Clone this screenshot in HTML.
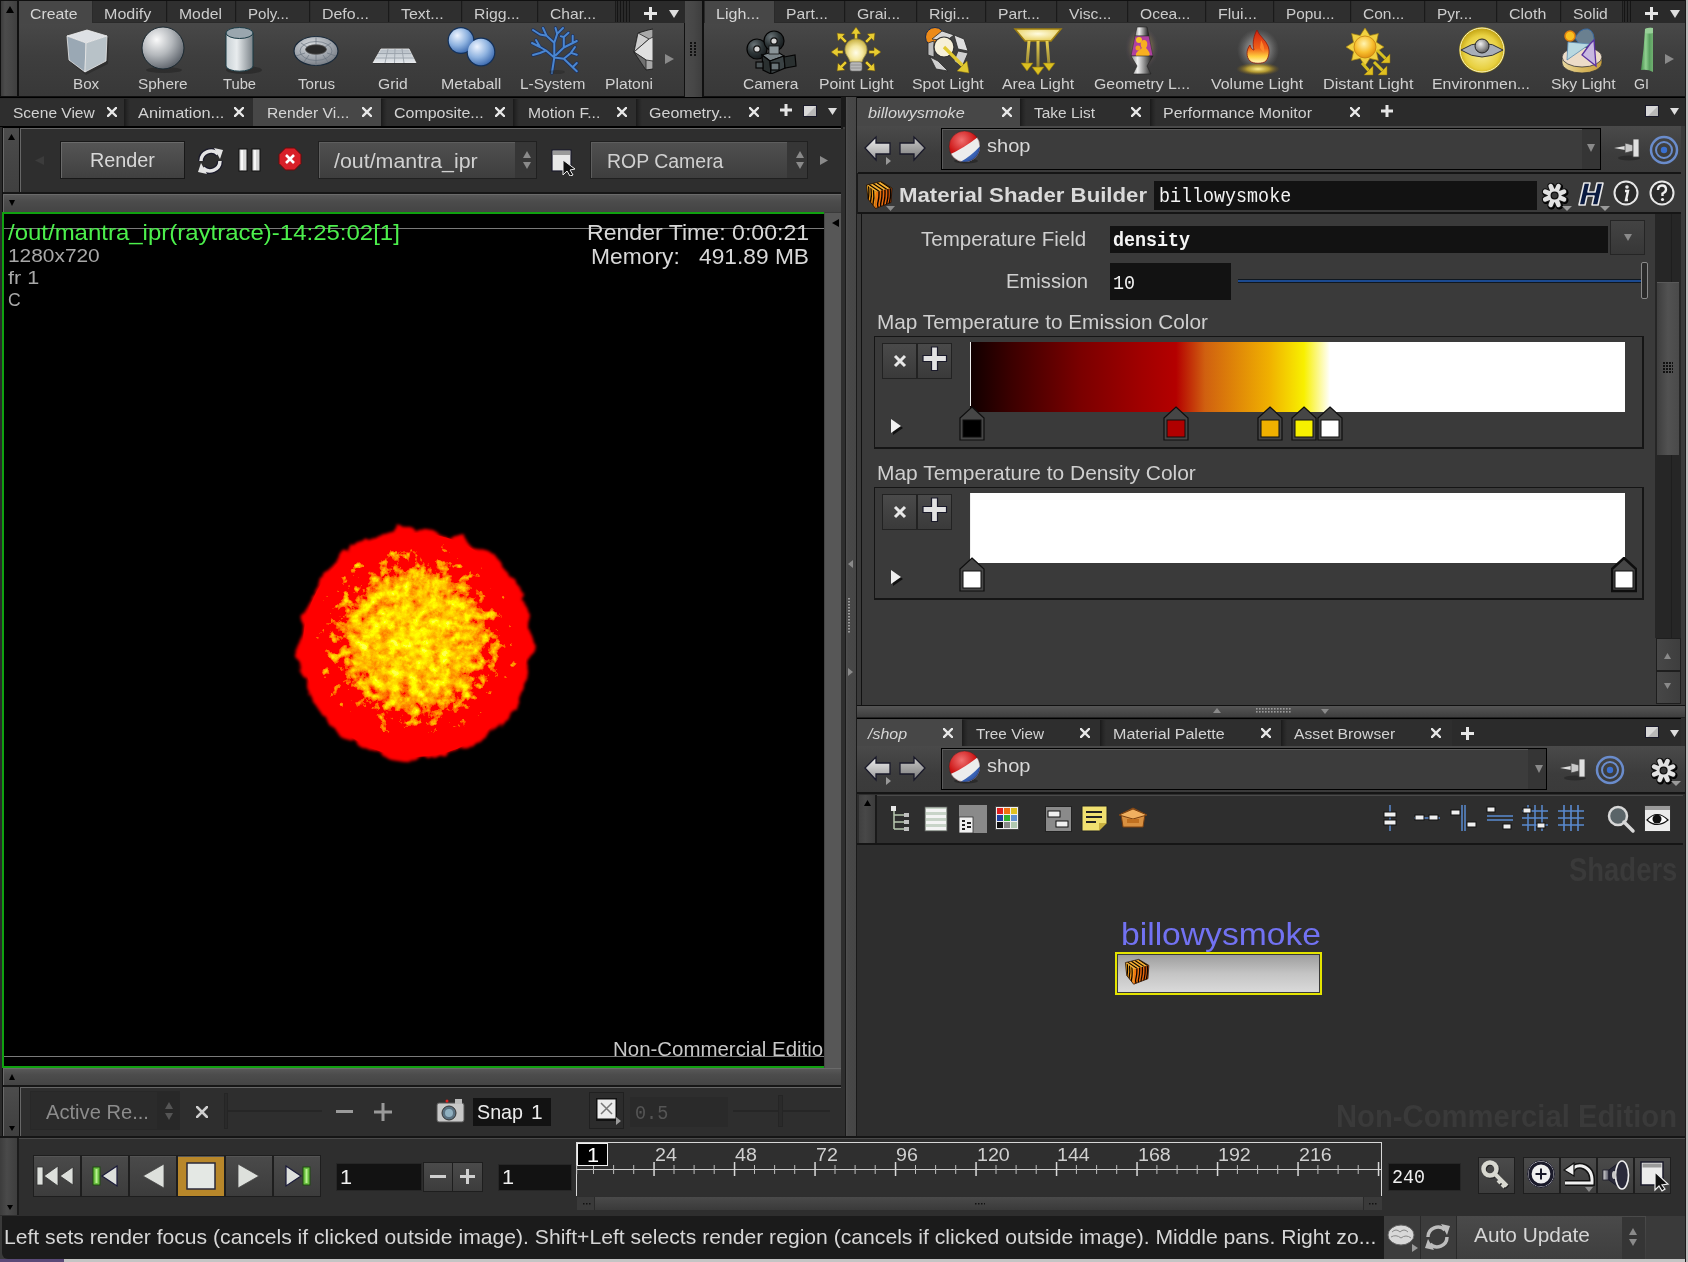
<!DOCTYPE html><html><head><meta charset="utf-8"><style>
*{margin:0;padding:0;box-sizing:border-box}
html,body{width:1688px;height:1262px;overflow:hidden;background:#3a3a3a}
div,span,svg{position:absolute;display:block}
.t{white-space:nowrap;line-height:1;transform-origin:0 0}
</style></head><body><div style="left:0px;top:0px;width:1688px;height:98px;background:#101010"></div>
<div style="left:1px;top:1px;width:16px;height:95px;background:linear-gradient(90deg,#3c3c3c,#4c4c4c 25%,#454545 70%,#3f3f3f)"></div>
<svg style="left:6px;top:6px" width="8" height="7" viewBox="0 0 8 7"><polygon points="4,0 8,7 0,7" fill="#000"/></svg>
<div style="left:19px;top:1px;width:666px;height:22px;background:#2a2a2a"></div>
<div style="left:19px;top:23px;width:665px;height:73px;background:linear-gradient(#484848,#3e3e3e 45%,#383838)"></div>
<div style="left:19px;top:1px;width:73px;height:23px;background:#474747"></div>
<span class="t" style="left:30.00px;top:5.62px;font-size:15.15px;font-family:'Liberation Sans',sans-serif;font-weight:normal;font-style:normal;color:#d4d4d4;transform:scaleX(1.0450);">Create</span>
<div style="left:93px;top:1px;width:74px;height:21px;background:#2f2f2f;border-right:1px solid #1a1a1a"></div>
<span class="t" style="left:104.00px;top:5.62px;font-size:15.15px;font-family:'Liberation Sans',sans-serif;font-weight:normal;font-style:normal;color:#cccccc;transform:scaleX(1.0617);">Modify</span>
<div style="left:168px;top:1px;width:68px;height:21px;background:#2f2f2f;border-right:1px solid #1a1a1a"></div>
<span class="t" style="left:179.00px;top:5.62px;font-size:15.15px;font-family:'Liberation Sans',sans-serif;font-weight:normal;font-style:normal;color:#cccccc;transform:scaleX(1.0401);">Model</span>
<div style="left:237px;top:1px;width:73px;height:21px;background:#2f2f2f;border-right:1px solid #1a1a1a"></div>
<span class="t" style="left:248.00px;top:5.62px;font-size:15.15px;font-family:'Liberation Sans',sans-serif;font-weight:normal;font-style:normal;color:#cccccc;transform:scaleX(0.9978);">Poly...</span>
<div style="left:311px;top:1px;width:78px;height:21px;background:#2f2f2f;border-right:1px solid #1a1a1a"></div>
<span class="t" style="left:322.00px;top:5.62px;font-size:15.15px;font-family:'Liberation Sans',sans-serif;font-weight:normal;font-style:normal;color:#cccccc;transform:scaleX(1.0524);">Defo...</span>
<div style="left:390px;top:1px;width:72px;height:21px;background:#2f2f2f;border-right:1px solid #1a1a1a"></div>
<span class="t" style="left:401.00px;top:5.62px;font-size:15.15px;font-family:'Liberation Sans',sans-serif;font-weight:normal;font-style:normal;color:#cccccc;transform:scaleX(1.0542);">Text...</span>
<div style="left:463px;top:1px;width:75px;height:21px;background:#2f2f2f;border-right:1px solid #1a1a1a"></div>
<span class="t" style="left:474.00px;top:5.62px;font-size:15.15px;font-family:'Liberation Sans',sans-serif;font-weight:normal;font-style:normal;color:#cccccc;transform:scaleX(1.0437);">Rigg...</span>
<div style="left:539px;top:1px;width:77px;height:21px;background:#2f2f2f;border-right:1px solid #1a1a1a"></div>
<span class="t" style="left:550.00px;top:5.62px;font-size:15.15px;font-family:'Liberation Sans',sans-serif;font-weight:normal;font-style:normal;color:#cccccc;transform:scaleX(1.0309);">Char...</span>
<div style="left:617px;top:1px;width:1px;height:21px;background:#151515"></div>
<div style="left:620px;top:1px;width:1px;height:21px;background:#151515"></div>
<div style="left:623px;top:1px;width:1px;height:21px;background:#151515"></div>
<div style="left:626px;top:1px;width:1px;height:21px;background:#151515"></div>
<div style="left:629px;top:1px;width:1px;height:21px;background:#151515"></div>
<svg style="left:644px;top:7px" width="13" height="13" viewBox="0 0 13 13"><rect x="5" y="0" width="3" height="13" fill="#e6e6e6"/><rect x="0" y="5" width="13" height="3" fill="#e6e6e6"/></svg>
<svg style="left:669px;top:10px" width="10" height="8" viewBox="0 0 10 8"><polygon points="0,0 10,0 5,8" fill="#dedede"/></svg>
<div style="left:684px;top:23px;width:1px;height:74px;background:#111"></div>
<div style="left:685px;top:1px;width:17px;height:96px;background:linear-gradient(90deg,#4b4b4b,#474747 50%,#3e3e3e)"></div>
<svg style="left:690px;top:42px" width="7" height="15" viewBox="0 0 7 15"><rect x="0" y="0" width="2" height="2" fill="#111"/><rect x="4" y="0" width="2" height="2" fill="#111"/><rect x="0" y="3" width="2" height="2" fill="#111"/><rect x="4" y="3" width="2" height="2" fill="#111"/><rect x="0" y="6" width="2" height="2" fill="#111"/><rect x="4" y="6" width="2" height="2" fill="#111"/><rect x="0" y="9" width="2" height="2" fill="#111"/><rect x="4" y="9" width="2" height="2" fill="#111"/><rect x="0" y="12" width="2" height="2" fill="#111"/><rect x="4" y="12" width="2" height="2" fill="#111"/></svg>
<div style="left:704px;top:1px;width:981px;height:22px;background:#2a2a2a"></div>
<div style="left:704px;top:23px;width:981px;height:73px;background:linear-gradient(#484848,#3e3e3e 45%,#383838)"></div>
<div style="left:705px;top:1px;width:69px;height:23px;background:#474747"></div>
<span class="t" style="left:716.00px;top:5.62px;font-size:15.15px;font-family:'Liberation Sans',sans-serif;font-weight:normal;font-style:normal;color:#d4d4d4;transform:scaleX(1.0591);">Ligh...</span>
<div style="left:775px;top:1px;width:70px;height:21px;background:#2f2f2f;border-right:1px solid #1a1a1a"></div>
<span class="t" style="left:786.00px;top:5.62px;font-size:15.15px;font-family:'Liberation Sans',sans-serif;font-weight:normal;font-style:normal;color:#cccccc;transform:scaleX(1.0361);">Part...</span>
<div style="left:846px;top:1px;width:71px;height:21px;background:#2f2f2f;border-right:1px solid #1a1a1a"></div>
<span class="t" style="left:857.00px;top:5.62px;font-size:15.15px;font-family:'Liberation Sans',sans-serif;font-weight:normal;font-style:normal;color:#cccccc;transform:scaleX(1.0502);">Grai...</span>
<div style="left:918px;top:1px;width:68px;height:21px;background:#2f2f2f;border-right:1px solid #1a1a1a"></div>
<span class="t" style="left:929.00px;top:5.62px;font-size:15.15px;font-family:'Liberation Sans',sans-serif;font-weight:normal;font-style:normal;color:#cccccc;transform:scaleX(1.0483);">Rigi...</span>
<div style="left:987px;top:1px;width:70px;height:21px;background:#2f2f2f;border-right:1px solid #1a1a1a"></div>
<span class="t" style="left:998.00px;top:5.62px;font-size:15.15px;font-family:'Liberation Sans',sans-serif;font-weight:normal;font-style:normal;color:#cccccc;transform:scaleX(1.0361);">Part...</span>
<div style="left:1058px;top:1px;width:70px;height:21px;background:#2f2f2f;border-right:1px solid #1a1a1a"></div>
<span class="t" style="left:1069.00px;top:5.62px;font-size:15.15px;font-family:'Liberation Sans',sans-serif;font-weight:normal;font-style:normal;color:#cccccc;transform:scaleX(1.0341);">Visc...</span>
<div style="left:1129px;top:1px;width:77px;height:21px;background:#2f2f2f;border-right:1px solid #1a1a1a"></div>
<span class="t" style="left:1140.00px;top:5.62px;font-size:15.15px;font-family:'Liberation Sans',sans-serif;font-weight:normal;font-style:normal;color:#cccccc;transform:scaleX(1.0301);">Ocea...</span>
<div style="left:1207px;top:1px;width:67px;height:21px;background:#2f2f2f;border-right:1px solid #1a1a1a"></div>
<span class="t" style="left:1218.00px;top:5.62px;font-size:15.15px;font-family:'Liberation Sans',sans-serif;font-weight:normal;font-style:normal;color:#cccccc;transform:scaleX(1.0491);">Flui...</span>
<div style="left:1275px;top:1px;width:76px;height:21px;background:#2f2f2f;border-right:1px solid #1a1a1a"></div>
<span class="t" style="left:1286.00px;top:5.62px;font-size:15.15px;font-family:'Liberation Sans',sans-serif;font-weight:normal;font-style:normal;color:#cccccc;transform:scaleX(1.0129);">Popu...</span>
<div style="left:1352px;top:1px;width:73px;height:21px;background:#2f2f2f;border-right:1px solid #1a1a1a"></div>
<span class="t" style="left:1363.00px;top:5.62px;font-size:15.15px;font-family:'Liberation Sans',sans-serif;font-weight:normal;font-style:normal;color:#cccccc;transform:scaleX(1.0248);">Con...</span>
<div style="left:1426px;top:1px;width:71px;height:21px;background:#2f2f2f;border-right:1px solid #1a1a1a"></div>
<span class="t" style="left:1437.00px;top:5.62px;font-size:15.15px;font-family:'Liberation Sans',sans-serif;font-weight:normal;font-style:normal;color:#cccccc;transform:scaleX(1.0225);">Pyr...</span>
<div style="left:1498px;top:1px;width:63px;height:21px;background:#2f2f2f;border-right:1px solid #1a1a1a"></div>
<span class="t" style="left:1509.00px;top:5.62px;font-size:15.15px;font-family:'Liberation Sans',sans-serif;font-weight:normal;font-style:normal;color:#cccccc;transform:scaleX(1.0570);">Cloth</span>
<div style="left:1562px;top:1px;width:61px;height:21px;background:#2f2f2f;border-right:1px solid #1a1a1a"></div>
<span class="t" style="left:1573.00px;top:5.62px;font-size:15.15px;font-family:'Liberation Sans',sans-serif;font-weight:normal;font-style:normal;color:#cccccc;transform:scaleX(1.0341);">Solid</span>
<div style="left:1624px;top:1px;width:1px;height:21px;background:#151515"></div>
<div style="left:1627px;top:1px;width:1px;height:21px;background:#151515"></div>
<div style="left:1630px;top:1px;width:1px;height:21px;background:#151515"></div>
<svg style="left:1645px;top:7px" width="13" height="13" viewBox="0 0 13 13"><rect x="5" y="0" width="3" height="13" fill="#e6e6e6"/><rect x="0" y="5" width="13" height="3" fill="#e6e6e6"/></svg>
<svg style="left:1670px;top:10px" width="10" height="8" viewBox="0 0 10 8"><polygon points="0,0 10,0 5,8" fill="#dedede"/></svg>
<span class="t" style="left:72.89px;top:77.30px;font-size:14.94px;font-family:'Liberation Sans',sans-serif;font-weight:normal;font-style:normal;color:#d0d0d0;transform:scaleX(1.0183);">Box</span>
<span class="t" style="left:137.66px;top:77.30px;font-size:14.94px;font-family:'Liberation Sans',sans-serif;font-weight:normal;font-style:normal;color:#d0d0d0;transform:scaleX(1.0310);">Sphere</span>
<span class="t" style="left:223.16px;top:77.30px;font-size:14.94px;font-family:'Liberation Sans',sans-serif;font-weight:normal;font-style:normal;color:#d0d0d0;transform:scaleX(0.9875);">Tube</span>
<span class="t" style="left:297.51px;top:77.30px;font-size:14.94px;font-family:'Liberation Sans',sans-serif;font-weight:normal;font-style:normal;color:#d0d0d0;transform:scaleX(1.0121);">Torus</span>
<span class="t" style="left:378.20px;top:77.30px;font-size:14.94px;font-family:'Liberation Sans',sans-serif;font-weight:normal;font-style:normal;color:#d0d0d0;transform:scaleX(1.0487);">Grid</span>
<span class="t" style="left:440.78px;top:77.30px;font-size:14.94px;font-family:'Liberation Sans',sans-serif;font-weight:normal;font-style:normal;color:#d0d0d0;transform:scaleX(1.0701);">Metaball</span>
<span class="t" style="left:520.37px;top:77.30px;font-size:14.94px;font-family:'Liberation Sans',sans-serif;font-weight:normal;font-style:normal;color:#d0d0d0;transform:scaleX(1.0345);">L-System</span>
<span class="t" style="left:743.34px;top:77.30px;font-size:14.94px;font-family:'Liberation Sans',sans-serif;font-weight:normal;font-style:normal;color:#d0d0d0;transform:scaleX(1.0408);">Camera</span>
<span class="t" style="left:818.66px;top:77.30px;font-size:14.94px;font-family:'Liberation Sans',sans-serif;font-weight:normal;font-style:normal;color:#d0d0d0;transform:scaleX(1.0576);">Point Light</span>
<span class="t" style="left:912.14px;top:77.30px;font-size:14.94px;font-family:'Liberation Sans',sans-serif;font-weight:normal;font-style:normal;color:#d0d0d0;transform:scaleX(1.0662);">Spot Light</span>
<span class="t" style="left:1001.94px;top:77.30px;font-size:14.94px;font-family:'Liberation Sans',sans-serif;font-weight:normal;font-style:normal;color:#d0d0d0;transform:scaleX(1.0589);">Area Light</span>
<span class="t" style="left:1093.95px;top:77.30px;font-size:14.94px;font-family:'Liberation Sans',sans-serif;font-weight:normal;font-style:normal;color:#d0d0d0;transform:scaleX(1.0617);">Geometry L...</span>
<span class="t" style="left:1210.94px;top:77.30px;font-size:14.94px;font-family:'Liberation Sans',sans-serif;font-weight:normal;font-style:normal;color:#d0d0d0;transform:scaleX(1.0663);">Volume Light</span>
<span class="t" style="left:1322.79px;top:77.30px;font-size:14.94px;font-family:'Liberation Sans',sans-serif;font-weight:normal;font-style:normal;color:#d0d0d0;transform:scaleX(1.0887);">Distant Light</span>
<span class="t" style="left:1432.02px;top:77.30px;font-size:14.94px;font-family:'Liberation Sans',sans-serif;font-weight:normal;font-style:normal;color:#d0d0d0;transform:scaleX(1.0628);">Environmen...</span>
<span class="t" style="left:1550.68px;top:77.30px;font-size:14.94px;font-family:'Liberation Sans',sans-serif;font-weight:normal;font-style:normal;color:#d0d0d0;transform:scaleX(1.0518);">Sky Light</span>
<span class="t" style="left:1634.46px;top:77.30px;font-size:14.94px;font-family:'Liberation Sans',sans-serif;font-weight:normal;font-style:normal;color:#d0d0d0;transform:scaleX(0.9563);">GI</span>
<span class="t" style="left:604.80px;top:77.30px;font-size:14.94px;font-family:'Liberation Sans',sans-serif;font-weight:normal;font-style:normal;color:#d0d0d0;transform:scaleX(1.0506);">Platoni</span>
<svg style="left:665px;top:54px" width="9" height="10" viewBox="0 0 9 10"><polygon points="0,0 9,5 0,10" fill="#8a8a8a"/></svg>
<svg style="left:1665px;top:54px" width="9" height="10" viewBox="0 0 9 10"><polygon points="0,0 9,5 0,10" fill="#8a8a8a"/></svg>
<svg style="left:64px;top:27px" width="46" height="48" viewBox="0 0 46 48"><defs>
<radialGradient id="gsph" cx="0.35" cy="0.3" r="0.75"><stop offset="0" stop-color="#fafafa"/><stop offset="0.5" stop-color="#b4b8bc"/><stop offset="1" stop-color="#5a6068"/></radialGradient>
<radialGradient id="gblue" cx="0.35" cy="0.3" r="0.75"><stop offset="0" stop-color="#eef4ff"/><stop offset="0.55" stop-color="#8fb3e0"/><stop offset="1" stop-color="#3d6bb0"/></radialGradient>
<linearGradient id="gtube" x1="0" x2="1"><stop offset="0" stop-color="#c8d0d4"/><stop offset="0.4" stop-color="#e8ecee"/><stop offset="1" stop-color="#7a8288"/></linearGradient>
<radialGradient id="gyel" cx="0.4" cy="0.35" r="0.7"><stop offset="0" stop-color="#fffbe0"/><stop offset="0.6" stop-color="#f0d860"/><stop offset="1" stop-color="#b89a20"/></radialGradient>
<radialGradient id="gred" cx="0.35" cy="0.3" r="0.75"><stop offset="0" stop-color="#ff8080"/><stop offset="0.6" stop-color="#d01010"/><stop offset="1" stop-color="#800000"/></radialGradient>
</defs><polygon points="3,9 23,3 43,9 42,35 20,46 5,34" fill="#1a1a1a" opacity="0.35" transform="translate(2,2)"/><polygon points="3,9 23,3 43,9 22,16" fill="#dde0e4" stroke="#f0f0f0" stroke-width="0.8"/><polygon points="3,9 22,16 21,45 5,33" fill="#9aa8b4" stroke="#e8e8e8" stroke-width="0.8"/><polygon points="22,16 43,9 42,34 21,45" fill="#b8c2c8" stroke="#e8e8e8" stroke-width="0.8"/></svg>
<svg style="left:140px;top:26px" width="46" height="48" viewBox="0 0 46 48"><ellipse cx="24" cy="44" rx="18" ry="3" fill="#202020" opacity="0.5"/><circle cx="23" cy="22" r="21" fill="url(#gsph)" stroke="#1a2830" stroke-width="1"/></svg>
<svg style="left:222px;top:26px" width="44" height="50" viewBox="0 0 44 50"><ellipse cx="22" cy="44" rx="18" ry="4" fill="#1a1a1a" opacity="0.45"/><path d="M4,7 L4,40 A13,5 0 0 0 31,40 L31,7 Z" fill="url(#gtube)" stroke="#1a3a44" stroke-width="1"/><ellipse cx="17.5" cy="7" rx="13.5" ry="5.5" fill="#9aa6ae" stroke="#1a3a44" stroke-width="1"/></svg>
<svg style="left:292px;top:35px" width="50" height="36" viewBox="0 0 50 36"><defs><radialGradient id="gtor" cx="0.4" cy="0.3" r="0.8"><stop offset="0" stop-color="#d8dce0"/><stop offset="0.6" stop-color="#9aa0a8"/><stop offset="1" stop-color="#6a7078"/></radialGradient></defs><ellipse cx="24" cy="16" rx="22" ry="14.5" fill="url(#gtor)" stroke="#1a2a3a" stroke-width="1.2"/><ellipse cx="24" cy="14.5" rx="10.5" ry="4.8" fill="#2a2a2a" stroke="#555" stroke-width="0.8"/><g fill="none" stroke="#6a7480" stroke-width="0.7"><ellipse cx="24" cy="16" rx="16" ry="9.5"/><path d="M9,8 L15,12 M39,8 L33,12 M24,1.5 L24,9.7 M24,20 L24,30.5 M4,21 L13,18 M44,21 L35,18 M12,27 L17,20 M36,27 L31,20"/></g></svg>
<svg style="left:371px;top:48px" width="48" height="17" viewBox="0 0 48 17"><defs><linearGradient id="ggrd" x1="0" y1="0" x2="0" y2="1"><stop offset="0" stop-color="#b4bcc4"/><stop offset="1" stop-color="#e4e8ec"/></linearGradient></defs><polygon points="10,1 38,1 45,15 2,15" fill="url(#ggrd)" stroke="#f0f0f0" stroke-width="0.8"/><path d="M7,5.5 H41 M4.5,10 H43 M17,1 L14,15 M24,1 L23.5,15 M31,1 L33,15" stroke="#9aa2aa" stroke-width="0.9"/><path d="M2,15.5 H45" stroke="#333" stroke-width="1"/></svg>
<svg style="left:447px;top:26px" width="52" height="42" viewBox="0 0 52 42"><g stroke="#12305a" stroke-width="2.4" fill="#12305a"><circle cx="14" cy="14.5" r="12.2"/><circle cx="34" cy="26" r="13.2"/><ellipse cx="24" cy="20" rx="6" ry="9" transform="rotate(-58 24 20)"/></g><ellipse cx="24" cy="20" rx="5.5" ry="8.5" transform="rotate(-58 24 20)" fill="#5a8ad0"/><circle cx="14" cy="14.5" r="12.2" fill="url(#gblue)"/><circle cx="34" cy="26" r="13.2" fill="url(#gblue)"/></svg>
<svg style="left:528px;top:24px" width="52" height="52" viewBox="0 0 52 52"><path d="M23.9,49.0 L26.3,33.6 L26.3,18.8 L18.5,11.7 L15.0,4.0 M18.5,11.7 L12.0,10.5 L5.0,6.0 M26.3,18.8 L29.2,9.9 L27.5,4.0 M29.2,9.9 L35.0,4.0 M26.3,33.6 L18.0,26.5 L12.0,23.0 L4.0,19.0 M18.0,26.5 L12.0,29.0 L5.0,31.0 M12.0,23.0 L8.0,16.0 M26.3,33.6 L35.8,34.8 L48.8,47.3 M45.3,42.5 L48.8,39.0 M35.8,34.8 L42.9,28.9 L47.0,23.0 M42.9,28.9 L48.8,30.7 M28.0,31.0 L35.8,23.5 L48.8,17.0 M35.8,23.5 L35.8,12.9 L40.5,8.7 M35.8,12.9 L32.8,12.3 M44.7,19.0 L44.7,11.7 " fill="none" stroke="#1a3060" stroke-width="3.4" stroke-linecap="round" stroke-linejoin="round"/><path d="M23.9,49.0 L26.3,33.6 L26.3,18.8 L18.5,11.7 L15.0,4.0 M18.5,11.7 L12.0,10.5 L5.0,6.0 M26.3,18.8 L29.2,9.9 L27.5,4.0 M29.2,9.9 L35.0,4.0 M26.3,33.6 L18.0,26.5 L12.0,23.0 L4.0,19.0 M18.0,26.5 L12.0,29.0 L5.0,31.0 M12.0,23.0 L8.0,16.0 M26.3,33.6 L35.8,34.8 L48.8,47.3 M45.3,42.5 L48.8,39.0 M35.8,34.8 L42.9,28.9 L47.0,23.0 M42.9,28.9 L48.8,30.7 M28.0,31.0 L35.8,23.5 L48.8,17.0 M35.8,23.5 L35.8,12.9 L40.5,8.7 M35.8,12.9 L32.8,12.3 M44.7,19.0 L44.7,11.7 " fill="none" stroke="#4a86d0" stroke-width="2" stroke-linecap="round" stroke-linejoin="round"/><ellipse cx="29" cy="48" rx="8" ry="2" fill="#222" opacity="0.4"/></svg>
<svg style="left:632px;top:27px" width="21" height="46" viewBox="0 0 21 46"><polygon points="16,3 21,2 21,42 14,43 2,25 6,6" fill="#a8a8a8" stroke="#222" stroke-width="1"/><polygon points="6,6 17,12 2,25" fill="#cfcfcf" stroke="#222" stroke-width="0.8"/><polygon points="17,12 21,10 21,34 14,33 2,25" fill="#e0e0e0" stroke="#222" stroke-width="0.8"/><polygon points="2,25 14,33 14,43" fill="#707070" stroke="#222" stroke-width="0.8"/></svg>
<svg style="left:746px;top:30px" width="52" height="44" viewBox="0 0 52 44"><defs><radialGradient id="greel" cx="0.35" cy="0.3" r="0.8"><stop offset="0" stop-color="#6a7478"/><stop offset="0.5" stop-color="#2e3638"/><stop offset="1" stop-color="#121618"/></radialGradient></defs><g stroke="#050505" stroke-width="1.2"><circle cx="11" cy="19" r="10" fill="url(#greel)"/><circle cx="28" cy="11" r="10" fill="url(#greel)"/><circle cx="11" cy="19" r="3.2" fill="#d8d8d8" stroke="#111"/><circle cx="28" cy="11" r="3.2" fill="#d8d8d8" stroke="#111"/><polygon points="16,25 30,21 38,26 24,31" fill="#7a8488"/><polygon points="16,25 24,31 25,44 17,40" fill="#2a3030"/><polygon points="24,31 38,26 39,38 25,44" fill="#3a4244"/><polygon points="38,27 49,25 50,36 39,38" fill="#2a3030"/><rect x="25" y="33" width="8" height="7" fill="#6a7478"/><rect x="10" y="32" width="7" height="6" fill="#4a5254"/></g><rect x="23" y="16" width="10" height="8" fill="#8a9498" stroke="#111" stroke-width="0.8"/></svg>
<svg style="left:830px;top:26px" width="52" height="50" viewBox="0 0 52 50"><defs><radialGradient id="gbulb" cx="0.5" cy="0.6" r="0.6"><stop offset="0" stop-color="#fffce8"/><stop offset="0.5" stop-color="#f4e8a0"/><stop offset="1" stop-color="#c8b040"/></radialGradient></defs><g fill="#e8cc30" stroke="#6a5410" stroke-width="0.6"><path d="M26,1 L31,8 L27.5,8 L27.5,13 L24.5,13 L24.5,8 L21,8 Z"/><path d="M1,26 L8,21 L8,24.5 L13,24.5 L13,27.5 L8,27.5 L8,31 Z"/><path d="M51,26 L44,21 L44,24.5 L39,24.5 L39,27.5 L44,27.5 L44,31 Z"/><path d="M7,7 L15,8 L12.5,10.5 L17,15 L15,17 L10.5,12.5 L8,15 Z"/><path d="M45,7 L37,8 L39.5,10.5 L35,15 L37,17 L41.5,12.5 L44,15 Z"/><path d="M7,45 L8,37 L10.5,39.5 L15,35 L17,37 L12.5,41.5 L15,44 Z"/><path d="M45,45 L44,37 L41.5,39.5 L37,35 L35,37 L39.5,41.5 L37,44 Z"/></g><path d="M26,13 C33,13 37,18 37,24 C37,29 33,31 32,36 L20,36 C19,31 15,29 15,24 C15,18 19,13 26,13 Z" fill="url(#gbulb)" stroke="#a09040" stroke-width="0.8"/><rect x="20" y="36" width="12" height="9" rx="2" fill="#b8b8b8" stroke="#707070" stroke-width="0.6"/><path d="M20.5,39 H31.5 M20.5,42 H31.5" stroke="#888" stroke-width="0.8"/></svg>
<svg style="left:924px;top:27px" width="48" height="48" viewBox="0 0 48 48"><circle cx="11" cy="10" r="9.5" fill="#ec8a18" stroke="#1a2a4a" stroke-width="1"/><g stroke="#2a2a2a" stroke-width="0.8"><polygon points="8,12 18,4 30,8 22,14" fill="#d8d8d8"/><polygon points="30,8 40,12 44,24 34,22" fill="#e0e0e0"/><polygon points="34,24 44,26 38,40 30,34" fill="#cfcfcf"/><polygon points="6,30 14,34 24,44 12,42" fill="#d0d0d0"/><polygon points="4,16 10,14 10,30 4,28" fill="#bdbdbd"/></g><circle cx="20" cy="20" r="10" fill="#f6f0d8" stroke="#333" stroke-width="1.2"/><path d="M20,20 L40,40" stroke="#e0c830" stroke-width="3.2"/><polygon points="45,46 33,44 43,34" fill="#e0c830" stroke="#8a7010" stroke-width="0.5"/></svg>
<svg style="left:1013px;top:27px" width="52" height="50" viewBox="0 0 52 50"><defs><linearGradient id="gar" x1="0" y1="0" x2="0" y2="1"><stop offset="0" stop-color="#e8d050"/><stop offset="1" stop-color="#8a7a30"/></linearGradient><radialGradient id="gap" cx="0.5" cy="0.4" r="0.6"><stop offset="0" stop-color="#fffce0"/><stop offset="1" stop-color="#e8d060"/></radialGradient></defs><polygon points="2,2 48,2 38,14 12,14" fill="url(#gap)" stroke="#a08010" stroke-width="1.5"/><g fill="none" stroke="url(#gar)" stroke-width="3"><path d="M16,14 L14,38 M25,14 L25,41 M34,14 L36,38"/></g><g fill="#dcc020" stroke="#8a7010" stroke-width="0.6"><polygon points="8,36 20,36 14,44"/><polygon points="19,40 31,40 25,48"/><polygon points="30,36 42,36 36,44"/></g></svg>
<svg style="left:1118px;top:26px" width="48" height="52" viewBox="0 0 48 52"><defs><radialGradient id="glav" cx="0.5" cy="0.45" r="0.5"><stop offset="0" stop-color="#f0e080" stop-opacity="0.8"/><stop offset="0.6" stop-color="#8a7a50" stop-opacity="0.5"/><stop offset="1" stop-color="#504060" stop-opacity="0"/></radialGradient><linearGradient id="gchr" x1="0" y1="0" x2="1" y2="0"><stop offset="0" stop-color="#8a8a8a"/><stop offset="0.3" stop-color="#f0f0f0"/><stop offset="0.7" stop-color="#707070"/><stop offset="1" stop-color="#111"/></linearGradient></defs><ellipse cx="24" cy="24" rx="17" ry="22" fill="url(#glav)"/><path d="M19,1 L29,1 L31,10 L17,10 Z" fill="url(#gchr)" stroke="#222" stroke-width="0.6"/><path d="M17,10 L31,10 L35,30 L13,30 Z" fill="#b040a0" stroke="#333" stroke-width="0.6"/><circle cx="21" cy="14" r="3" fill="#f8c020"/><path d="M26,14 C30,14 30,20 28,22 C32,26 33,30 30,30 L18,30 C17,26 22,24 24,22 C22,20 22,14 26,14 Z" fill="#f8b020"/><circle cx="20" cy="22" r="2.5" fill="#f0a020"/><path d="M13,30 L35,30 L29,40 L33,48 L15,48 L19,40 Z" fill="url(#gchr)" stroke="#222" stroke-width="0.6"/></svg>
<svg style="left:1232px;top:26px" width="52" height="50" viewBox="0 0 52 50"><defs><radialGradient id="gvg" cx="0.5" cy="0.5" r="0.5"><stop offset="0" stop-color="#d8d8d8" stop-opacity="0.9"/><stop offset="0.6" stop-color="#a0a0a0" stop-opacity="0.5"/><stop offset="1" stop-color="#808080" stop-opacity="0"/></radialGradient><radialGradient id="gvy" cx="0.5" cy="0.5" r="0.5"><stop offset="0" stop-color="#fff090"/><stop offset="0.5" stop-color="#d0b030" stop-opacity="0.8"/><stop offset="1" stop-color="#806010" stop-opacity="0"/></radialGradient><linearGradient id="gfl" x1="0" y1="0" x2="0" y2="1"><stop offset="0" stop-color="#d02010"/><stop offset="0.55" stop-color="#f06018"/><stop offset="0.8" stop-color="#ffd040"/><stop offset="1" stop-color="#fff8c0"/></linearGradient></defs><circle cx="26" cy="24" r="21" fill="url(#gvg)"/><ellipse cx="26" cy="43" rx="22" ry="6.5" fill="url(#gvy)"/><path d="M25,4 C27,10 34,14 36,20 C38,25 37,31 34,35 C31,38 21,38 18,35 C14,31 14,24 18,19 C19,23 21,24 22,24 C20,17 22,9 25,4 Z" fill="url(#gfl)" stroke="#901808" stroke-width="0.8"/><path d="M29,14 C31,18 33,22 32,27 L28,22 Z" fill="#ff9030" opacity="0.8"/></svg>
<svg style="left:1343px;top:26px" width="50" height="50" viewBox="0 0 50 50"><defs><radialGradient id="gsun" cx="0.45" cy="0.35" r="0.65"><stop offset="0" stop-color="#fff4b0"/><stop offset="0.6" stop-color="#f8c030"/><stop offset="1" stop-color="#e09010"/></radialGradient></defs><polygon points="22.0,2.0 26.8,9.5 35.4,7.6 33.5,16.2 41.0,21.0 33.5,25.8 35.4,34.4 26.8,32.5 22.0,40.0 17.2,32.5 8.6,34.4 10.5,25.8 3.0,21.0 10.5,16.2 8.6,7.6 17.2,9.5" fill="#f0d040" stroke="#a08010" stroke-width="0.7"/><circle cx="22" cy="21" r="11" fill="url(#gsun)" stroke="#c08010" stroke-width="0.8"/><g stroke="#d8c020" stroke-width="3"><path d="M34,24 L43,33 M19,37 L27,46 M31,36 L40,45"/></g><polygon points="47,37 38,37 47,28" fill="#e0c020" stroke="#907010" stroke-width="0.5"/><polygon points="30,49 21,49 30,40" fill="#e0c020" stroke="#907010" stroke-width="0.5"/><polygon points="44,49 35,49 44,40" fill="#e0c020" stroke="#907010" stroke-width="0.5"/></svg>
<svg style="left:1457px;top:26px" width="50" height="50" viewBox="0 0 50 50"><defs><radialGradient id="genv" cx="0.5" cy="0.55" r="0.55"><stop offset="0" stop-color="#f8f0a0"/><stop offset="0.7" stop-color="#e8d040"/><stop offset="1" stop-color="#c0a010"/></radialGradient><radialGradient id="geb" cx="0.4" cy="0.35" r="0.6"><stop offset="0" stop-color="#f0f0f0"/><stop offset="1" stop-color="#6a6a6a"/></radialGradient></defs><circle cx="25" cy="24" r="23" fill="#8a7810"/><circle cx="25" cy="24" r="22" fill="url(#genv)" stroke="#fff8c0" stroke-width="1"/><path d="M4,24 Q25,10 46,24 Q25,38 4,24 Z" fill="#a8aeb8" stroke="#333" stroke-width="1"/><circle cx="25" cy="20" r="7" fill="url(#geb)" stroke="#222" stroke-width="1"/></svg>
<svg style="left:1560px;top:26px" width="46" height="50" viewBox="0 0 46 50"><defs><linearGradient id="gsky" x1="0" y1="0" x2="1" y2="0"><stop offset="0" stop-color="#e8d8a0"/><stop offset="0.5" stop-color="#d8b860"/><stop offset="1" stop-color="#c8a040"/></linearGradient></defs><path d="M2,31 L2,37 A20,10 0 0 0 42,37 L42,31 Z" fill="url(#gsky)" stroke="#333" stroke-width="0.8"/><ellipse cx="22" cy="31" rx="20" ry="10" fill="#ecdcc8" stroke="#333" stroke-width="0.8"/><path d="M15,12 Q20,2 28,3 Q35,5 34,18 L22,22 Z" fill="#6a8090" stroke="#3a6aa0" stroke-width="1"/><path d="M7,34 L8,16 L30,18 Z" fill="#b8d8e0" stroke="#5a8ab0" stroke-width="0.8"/><path d="M30,18 L34,14 L36,40 L22,29 Z" fill="#c8b8e0" stroke="#5a30a0" stroke-width="1.3"/><circle cx="10" cy="10" r="5" fill="#f8c020" stroke="#e08010" stroke-width="1.5"/></svg>
<svg style="left:1640px;top:27px" width="13" height="48" viewBox="0 0 13 48"><defs><linearGradient id="ggi" x1="0" y1="0" x2="1" y2="0"><stop offset="0" stop-color="#4a9050"/><stop offset="0.4" stop-color="#90d090"/><stop offset="0.7" stop-color="#5aa060"/><stop offset="1" stop-color="#70b070"/></linearGradient></defs><path d="M5,2 Q9,0 13,1 L13,45 Q8,42 1,43 Q4,22 5,2 Z" fill="url(#ggi)"/><path d="M5,2 Q9,0 13,1 L13,6 Q9,7 5,6 Z" fill="#98d098"/></svg>
<div style="left:0px;top:97px;width:845px;height:1px;background:#000"></div>
<div style="left:0px;top:98px;width:845px;height:28px;background:#2b2b2b"></div>
<div style="left:0px;top:99px;width:124px;height:27px;background:#2e2e2e"></div>
<span class="t" style="left:12.50px;top:105.17px;font-size:15.10px;font-family:'Liberation Sans',sans-serif;font-weight:normal;font-style:normal;color:#d2d2d2;transform:scaleX(1.0287);">Scene View</span>
<svg style="left:107px;top:107px" width="10" height="10" viewBox="0 0 10 10"><path d="M1,1 L9,9 M9,1 L1,9" stroke="#e8e8e8" stroke-width="2.4" stroke-linecap="square"/></svg>
<div style="left:124px;top:99px;width:129px;height:27px;background:linear-gradient(90deg,#1a1a1a,#262626 3px,#2e2e2e 6px,#2e2e2e)"></div>
<span class="t" style="left:138.00px;top:105.17px;font-size:15.10px;font-family:'Liberation Sans',sans-serif;font-weight:normal;font-style:normal;color:#d2d2d2;transform:scaleX(1.0817);">Animation...</span>
<svg style="left:234px;top:107px" width="10" height="10" viewBox="0 0 10 10"><path d="M1,1 L9,9 M9,1 L1,9" stroke="#e8e8e8" stroke-width="2.4" stroke-linecap="square"/></svg>
<div style="left:253px;top:98px;width:128px;height:30px;background:#474747"></div>
<span class="t" style="left:266.50px;top:105.17px;font-size:15.10px;font-family:'Liberation Sans',sans-serif;font-weight:normal;font-style:normal;color:#d6d6d6;transform:scaleX(1.0352);">Render Vi...</span>
<svg style="left:362px;top:107px" width="10" height="10" viewBox="0 0 10 10"><path d="M1,1 L9,9 M9,1 L1,9" stroke="#e8e8e8" stroke-width="2.4" stroke-linecap="square"/></svg>
<div style="left:381px;top:99px;width:132px;height:27px;background:linear-gradient(90deg,#1a1a1a,#262626 3px,#2e2e2e 6px,#2e2e2e)"></div>
<span class="t" style="left:394.00px;top:105.17px;font-size:15.10px;font-family:'Liberation Sans',sans-serif;font-weight:normal;font-style:normal;color:#d2d2d2;transform:scaleX(1.0578);">Composite...</span>
<svg style="left:495px;top:107px" width="10" height="10" viewBox="0 0 10 10"><path d="M1,1 L9,9 M9,1 L1,9" stroke="#e8e8e8" stroke-width="2.4" stroke-linecap="square"/></svg>
<div style="left:513px;top:99px;width:123px;height:27px;background:linear-gradient(90deg,#1a1a1a,#262626 3px,#2e2e2e 6px,#2e2e2e)"></div>
<span class="t" style="left:527.50px;top:105.17px;font-size:15.10px;font-family:'Liberation Sans',sans-serif;font-weight:normal;font-style:normal;color:#d2d2d2;transform:scaleX(1.0385);">Motion F...</span>
<svg style="left:617px;top:107px" width="10" height="10" viewBox="0 0 10 10"><path d="M1,1 L9,9 M9,1 L1,9" stroke="#e8e8e8" stroke-width="2.4" stroke-linecap="square"/></svg>
<div style="left:636px;top:99px;width:134px;height:27px;background:linear-gradient(90deg,#1a1a1a,#262626 3px,#2e2e2e 6px,#2e2e2e)"></div>
<span class="t" style="left:649.00px;top:105.17px;font-size:15.10px;font-family:'Liberation Sans',sans-serif;font-weight:normal;font-style:normal;color:#d2d2d2;transform:scaleX(1.0625);">Geometry...</span>
<svg style="left:749px;top:107px" width="10" height="10" viewBox="0 0 10 10"><path d="M1,1 L9,9 M9,1 L1,9" stroke="#e8e8e8" stroke-width="2.4" stroke-linecap="square"/></svg>
<div style="left:0px;top:126px;width:845px;height:2px;background:#000"></div>
<div style="left:20px;top:128px;width:821px;height:1px;background:#666"></div>
<svg style="left:780px;top:104px" width="12" height="12" viewBox="0 0 12 12"><rect x="4.5" y="0" width="3" height="12" fill="#e6e6e6"/><rect x="0" y="4.5" width="12" height="3" fill="#e6e6e6"/></svg>
<svg style="left:803px;top:105px" width="14" height="12" viewBox="0 0 14 12"><rect x="0.5" y="0.5" width="13" height="11" fill="#d8d8d8" stroke="#1a1a2a" stroke-width="1"/><polygon points="13,1 13,11 3,11" fill="#b8b8b8"/></svg>
<svg style="left:828px;top:108px" width="9" height="7" viewBox="0 0 9 7"><polygon points="0,0 9,0 4.5,7" fill="#dedede"/></svg>
<div style="left:841px;top:97px;width:17px;height:1040px;background:#1a1a1a"></div>
<div style="left:843px;top:127px;width:2px;height:1010px;background:#3a3a3a"></div>
<div style="left:846px;top:97px;width:10px;height:1040px;background:linear-gradient(90deg,#505050,#484848 20%,#464646)"></div>
<div style="left:0px;top:129px;width:845px;height:1008px;background:#2e2e2e"></div>
<div style="left:0px;top:127px;width:2px;height:1010px;background:#2a2a2a"></div>
<div style="left:2px;top:127px;width:1px;height:1010px;background:#111"></div>
<div style="left:3px;top:128px;width:16px;height:65px;background:linear-gradient(#4c4c4c,#444 60%,#404040);box-shadow:inset 1px 0 0 #6a6a6a"></div>
<svg style="left:8px;top:134px" width="7" height="6" viewBox="0 0 7 6"><polygon points="0,6 7,6 3.5,0" fill="#000"/></svg>
<div style="left:19px;top:128px;width:1px;height:65px;background:#111"></div>
<div style="left:20px;top:128px;width:1px;height:65px;background:#666"></div>
<div style="left:21px;top:129px;width:820px;height:64px;background:#2e2e2e"></div>
<div style="left:3px;top:192px;width:838px;height:2px;background:#161616"></div>
<svg style="left:35px;top:156px" width="9" height="9" viewBox="0 0 9 9"><polygon points="9,0 0,4.5 9,9" fill="#3c3c3c"/></svg>
<div style="left:60px;top:141px;width:125px;height:38px;background:linear-gradient(#555,#404040);border:1px solid #181818;box-shadow:inset 1px 1px 0 #6a6a6a"></div>
<span class="t" style="left:90.01px;top:150.56px;font-size:19.34px;font-family:'Liberation Sans',sans-serif;font-weight:normal;font-style:normal;color:#d8d8d8;transform:scaleX(1.0246);">Render</span>
<svg style="left:196px;top:146px" width="29" height="30" viewBox="0 0 29 30"><g fill="none" stroke="#1a1a2a" stroke-width="6"><path d="M5,15 A10,10 0 0 1 22,8"/><path d="M24,15 A10,10 0 0 1 7,22"/></g><g fill="none" stroke="#e4e4e4" stroke-width="3.5"><path d="M5,15 A10,10 0 0 1 22,8"/><path d="M24,15 A10,10 0 0 1 7,22"/></g><polygon points="18,2 27,4 24,13" fill="#e4e4e4"/><polygon points="11,28 2,26 5,17" fill="#e4e4e4"/></svg>
<svg style="left:238px;top:148px" width="24" height="25" viewBox="0 0 24 25"><rect x="1" y="1" width="8" height="22" fill="#d8d8d8" stroke="#111" stroke-width="1"/><rect x="14" y="1" width="8" height="22" fill="#d8d8d8" stroke="#111" stroke-width="1"/><rect x="3" y="2" width="2" height="20" fill="#f8f8f8"/><rect x="16" y="2" width="2" height="20" fill="#f8f8f8"/></svg>
<svg style="left:278px;top:147px" width="25" height="26" viewBox="0 0 25 26"><polygon points="7.5,1 16.5,1 23,7.5 23,16.5 16.5,23 7.5,23 1,16.5 1,7.5" fill="#d82028" stroke="#6a0a0a" stroke-width="1"/><path d="M8,8 L16,16 M16,8 L8,16" stroke="#fff" stroke-width="2.6"/></svg>
<div style="left:318px;top:141px;width:219px;height:38px;background:linear-gradient(#505050,#3e3e3e);border:1px solid #202020;box-shadow:inset 1px 1px 0 #5e5e5e"></div>
<div style="left:515px;top:142px;width:21px;height:36px;background:#363636"></div>
<span class="t" style="left:334.00px;top:151.54px;font-size:19.60px;font-family:'Liberation Sans',sans-serif;font-weight:normal;font-style:normal;color:#d0d0d0;transform:scaleX(1.0907);">/out/mantra_ipr</span>
<svg style="left:523px;top:151px" width="8" height="19" viewBox="0 0 8 19"><polygon points="4,0 8,7 0,7" fill="#8a8a8a"/><polygon points="0,11 8,11 4,18" fill="#8a8a8a"/></svg>
<svg style="left:551px;top:148px" width="28" height="28" viewBox="0 0 28 28"><rect x="1" y="2" width="19" height="21" fill="#e8e8e8" stroke="#1a1a2a" stroke-width="1.2"/><rect x="2" y="3" width="17" height="4" fill="#9a9a9a"/><polygon points="12,12 12,27 16,23 19,28 22,27 19,22 24,21" fill="#111" stroke="#eee" stroke-width="1"/></svg>
<div style="left:590px;top:141px;width:218px;height:38px;background:linear-gradient(#505050,#3e3e3e);border:1px solid #202020;box-shadow:inset 1px 1px 0 #5e5e5e"></div>
<div style="left:787px;top:142px;width:20px;height:36px;background:#363636"></div>
<span class="t" style="left:606.50px;top:151.63px;font-size:19.50px;font-family:'Liberation Sans',sans-serif;font-weight:normal;font-style:normal;color:#d0d0d0;transform:scaleX(0.9979);">ROP Camera</span>
<svg style="left:796px;top:151px" width="8" height="19" viewBox="0 0 8 19"><polygon points="4,0 8,7 0,7" fill="#8a8a8a"/><polygon points="0,11 8,11 4,18" fill="#8a8a8a"/></svg>
<svg style="left:820px;top:156px" width="8" height="9" viewBox="0 0 8 9"><polygon points="0,0 8,4.5 0,9" fill="#8a8a8a"/></svg>
<div style="left:3px;top:194px;width:838px;height:18px;background:linear-gradient(#5a5a5a,#4c4c4c 40%,#444);box-shadow:inset 1px 1px 0 #6a6a6a"></div>
<svg style="left:9px;top:200px" width="6" height="6" viewBox="0 0 6 6"><polygon points="0,0 6,0 3.0,6" fill="#000"/></svg>
<div style="left:2px;top:212px;width:822px;height:856px;background:#000;border-top:2px solid #10a010;border-left:2px solid #10a010;border-bottom:2px solid #10a010"></div>
<div style="left:4px;top:228px;width:820px;height:1px;background:#7a7a7a"></div>
<div style="left:4px;top:1056px;width:820px;height:1px;background:#7a7a7a"></div>
<div style="left:824px;top:212px;width:17px;height:856px;background:#575757;border-left:1px solid #474747;border-top:1px solid #3a3a3a"></div>
<svg style="left:832px;top:219px" width="7" height="8" viewBox="0 0 7 8"><polygon points="7,0 0,4.0 7,8" fill="#000"/></svg>
<span class="t" style="left:7.50px;top:221.95px;font-size:21.83px;font-family:'Liberation Sans',sans-serif;font-weight:normal;font-style:normal;color:#4cf04c;transform:scaleX(1.0984);">/out/mantra_ipr(raytrace)-14:25:02[1]</span>
<span class="t" style="left:8.00px;top:246.11px;font-size:19.28px;font-family:'Liberation Sans',sans-serif;font-weight:normal;font-style:normal;color:#a8a8a8;transform:scaleX(1.0838);">1280x720</span>
<span class="t" style="left:8.00px;top:267.61px;font-size:19.28px;font-family:'Liberation Sans',sans-serif;font-weight:normal;font-style:normal;color:#a8a8a8;transform:scaleX(1.1214);">fr 1</span>
<span class="t" style="left:8.00px;top:289.61px;font-size:19.28px;font-family:'Liberation Sans',sans-serif;font-weight:normal;font-style:normal;color:#a8a8a8;transform:scaleX(0.9124);">C</span>
<span class="t" style="left:586.88px;top:221.94px;font-size:21.72px;font-family:'Liberation Sans',sans-serif;font-weight:normal;font-style:normal;color:#d8d8d8;transform:scaleX(1.0633);">Render Time: 0:00:21</span>
<span class="t" style="left:591.00px;top:245.54px;font-size:21.72px;font-family:'Liberation Sans',sans-serif;font-weight:normal;font-style:normal;color:#d8d8d8;transform:scaleX(1.0510);">Memory:</span>
<span class="t" style="left:699.00px;top:245.54px;font-size:21.72px;font-family:'Liberation Sans',sans-serif;font-weight:normal;font-style:normal;color:#d8d8d8;transform:scaleX(1.0472);">491.89 MB</span>
<div style="left:600px;top:1036px;width:224px;height:24px;overflow:hidden">
<span class="t" style="left:12.50px;top:3.52px;font-size:19.39px;font-family:'Liberation Sans',sans-serif;font-weight:normal;font-style:normal;color:#c8c8c8;transform:scaleX(1.0549);">Non-Commercial Edition</span>
</div>
<svg style="left:280px;top:510px" width="270" height="270" viewBox="0 0 270 270"><defs>
<radialGradient id="fbh" cx="0.5" cy="0.48" r="0.5"><stop offset="0" stop-color="#fff"/><stop offset="0.45" stop-color="#f0f0f0"/><stop offset="0.72" stop-color="#b0b0b0"/><stop offset="0.9" stop-color="#000"/><stop offset="1" stop-color="#000"/></radialGradient>
<filter id="fcore" x="0" y="0" width="270" height="270" filterUnits="userSpaceOnUse">
<feTurbulence type="fractalNoise" baseFrequency="0.1" numOctaves="4" seed="11" result="noise"/>
<feComposite in="SourceGraphic" in2="noise" operator="arithmetic" k1="0" k2="1.2" k3="1.7" k4="-0.98" result="heat"/>
<feColorMatrix in="heat" type="matrix" values="0 0 0 0 1  1.75 0 0 0 -0.38  0.7 0 0 0 -0.62  0 0 0 0 1" result="col"/>
<feComposite in="col" in2="SourceAlpha" operator="in"/>
</filter>
<filter id="fe" x="0" y="0" width="270" height="270" filterUnits="userSpaceOnUse"><feTurbulence type="fractalNoise" baseFrequency="0.045" numOctaves="3" seed="7" result="n"/><feDisplacementMap in="SourceGraphic" in2="n" scale="18" xChannelSelector="R" yChannelSelector="G"/><feGaussianBlur stdDeviation="1.4"/></filter>
<clipPath id="fclip"><circle cx="135" cy="135" r="112"/></clipPath>
</defs>
<g filter="url(#fe)"><ellipse cx="135.5" cy="134.5" rx="117" ry="115" fill="#ff0000"/></g>
<g clip-path="url(#fclip)"><rect x="0" y="0" width="270" height="270" fill="url(#fbh)" filter="url(#fcore)"/></g></svg>
<div style="left:3px;top:1068px;width:838px;height:17px;background:linear-gradient(#5a5a5a,#4c4c4c 40%,#444);box-shadow:inset 1px 1px 0 #6a6a6a"></div>
<svg style="left:9px;top:1074px" width="6" height="6" viewBox="0 0 6 6"><polygon points="0,6 6,6 3.0,0" fill="#000"/></svg>
<div style="left:3px;top:1085px;width:838px;height:2px;background:#161616"></div>
<div style="left:3px;top:1087px;width:16px;height:49px;background:linear-gradient(#4c4c4c,#444 60%,#404040);box-shadow:inset 1px 0 0 #6a6a6a"></div>
<svg style="left:9px;top:1126px" width="6" height="5" viewBox="0 0 6 5"><polygon points="0,0 6,0 3.0,5" fill="#000"/></svg>
<div style="left:19px;top:1087px;width:1px;height:49px;background:#111"></div>
<div style="left:20px;top:1087px;width:1px;height:49px;background:#666"></div>
<div style="left:21px;top:1087px;width:820px;height:1px;background:#666"></div>
<div style="left:21px;top:1088px;width:820px;height:48px;background:#2e2e2e"></div>
<div style="left:30px;top:1091px;width:150px;height:39px;background:#2b2b2b;border:1px solid #282828"></div>
<div style="left:157px;top:1092px;width:22px;height:37px;background:#282828"></div>
<span class="t" style="left:46.00px;top:1102.52px;font-size:19.39px;font-family:'Liberation Sans',sans-serif;font-weight:normal;font-style:normal;color:#8c8c8c;transform:scaleX(1.0392);">Active Re...</span>
<svg style="left:165px;top:1102px" width="8" height="19" viewBox="0 0 8 19"><polygon points="4,0 8,7 0,7" fill="#555"/><polygon points="0,11 8,11 4,18" fill="#555"/></svg>
<svg style="left:196px;top:1106px" width="12" height="12" viewBox="0 0 12 12"><path d="M1,1 L11,11 M11,1 L1,11" stroke="#cfcfcf" stroke-width="2.6" stroke-linecap="square"/></svg>
<div style="left:225px;top:1110px;width:97px;height:2px;background:#262626"></div>
<div style="left:224px;top:1093px;width:4px;height:36px;background:#2a2a2a;border:1px solid #252525"></div>
<div style="left:336px;top:1110px;width:17px;height:3px;background:#9a9a9a"></div>
<svg style="left:374px;top:1103px" width="18" height="18" viewBox="0 0 18 18"><rect x="7.5" y="0" width="3" height="18" fill="#9a9a9a"/><rect x="0" y="7.5" width="18" height="3" fill="#9a9a9a"/></svg>
<svg style="left:436px;top:1097px" width="30" height="28" viewBox="0 0 30 28"><rect x="1" y="6" width="27" height="19" rx="2" fill="#c8c8c8" stroke="#555" stroke-width="1"/><rect x="19" y="2" width="7" height="5" fill="#bbb"/><circle cx="13" cy="16" r="7" fill="#5a7080" stroke="#333" stroke-width="1"/><circle cx="13" cy="16" r="4" fill="#90b0c0"/><circle cx="11" cy="4" r="1.5" fill="#e02020"/></svg>
<div style="left:473px;top:1098px;width:78px;height:28px;background:#121212"></div>
<span class="t" style="left:477.00px;top:1102.52px;font-size:19.39px;font-family:'Liberation Sans',sans-serif;font-weight:normal;font-style:normal;color:#ececec;transform:scaleX(1.0169);">Snap</span>
<span class="t" style="left:531.36px;top:1102.52px;font-size:19.39px;font-family:'Liberation Sans',sans-serif;font-weight:normal;font-style:normal;color:#ececec;transform:scaleX(1.0796);">1</span>
<div style="left:589px;top:1092px;width:35px;height:37px;background:#2c2c2c;border:1px solid #202020"></div>
<svg style="left:595px;top:1097px" width="26" height="30" viewBox="0 0 26 30"><rect x="1" y="1" width="21" height="23" fill="#111"/><rect x="2.5" y="2.5" width="18" height="19" fill="#ececec"/><path d="M6,6 L17,17 M17,6 L6,17" stroke="#777" stroke-width="1.5"/><polygon points="21,20 26,24 21,28" fill="#9a9a9a"/></svg>
<div style="left:630px;top:1097px;width:98px;height:30px;background:#2a2a2a"></div>
<span class="t" style="left:635.00px;top:1103.53px;font-size:20.35px;font-family:'Liberation Mono',monospace;font-weight:normal;font-style:normal;color:#555555;transform:scaleX(0.9070);">0.5</span>
<div style="left:733px;top:1110px;width:97px;height:2px;background:#262626"></div>
<div style="left:778px;top:1095px;width:5px;height:32px;background:#2a2a2a;border:1px solid #252525"></div>
<div style="left:857px;top:97px;width:831px;height:1px;background:#000"></div>
<div style="left:857px;top:98px;width:831px;height:28px;background:#2b2b2b"></div>
<div style="left:857px;top:98px;width:163px;height:30px;background:#474747"></div>
<span class="t" style="left:868.00px;top:105.17px;font-size:15.10px;font-family:'Liberation Sans',sans-serif;font-weight:normal;font-style:italic;color:#d6d6d6;transform:scaleX(1.0779);">billowysmoke</span>
<svg style="left:1001.5px;top:107px" width="10" height="10" viewBox="0 0 10 10"><path d="M1,1 L9,9 M9,1 L1,9" stroke="#e8e8e8" stroke-width="2.4" stroke-linecap="square"/></svg>
<div style="left:1020px;top:99px;width:130px;height:27px;background:linear-gradient(90deg,#1a1a1a,#262626 3px,#2e2e2e 6px,#2e2e2e)"></div>
<span class="t" style="left:1033.60px;top:105.17px;font-size:15.10px;font-family:'Liberation Sans',sans-serif;font-weight:normal;font-style:normal;color:#d2d2d2;transform:scaleX(1.0251);">Take List</span>
<svg style="left:1131px;top:107px" width="10" height="10" viewBox="0 0 10 10"><path d="M1,1 L9,9 M9,1 L1,9" stroke="#e8e8e8" stroke-width="2.4" stroke-linecap="square"/></svg>
<div style="left:1150px;top:99px;width:220px;height:27px;background:linear-gradient(90deg,#1a1a1a,#262626 3px,#2e2e2e 6px,#2e2e2e)"></div>
<span class="t" style="left:1163.30px;top:105.17px;font-size:15.10px;font-family:'Liberation Sans',sans-serif;font-weight:normal;font-style:normal;color:#d2d2d2;transform:scaleX(1.0570);">Performance Monitor</span>
<svg style="left:1350px;top:107px" width="10" height="10" viewBox="0 0 10 10"><path d="M1,1 L9,9 M9,1 L1,9" stroke="#e8e8e8" stroke-width="2.4" stroke-linecap="square"/></svg>
<svg style="left:1381px;top:105px" width="12" height="12" viewBox="0 0 12 12"><rect x="4.5" y="0" width="3" height="12" fill="#e6e6e6"/><rect x="0" y="4.5" width="12" height="3" fill="#e6e6e6"/></svg>
<svg style="left:1645px;top:105px" width="14" height="12" viewBox="0 0 14 12"><rect x="0.5" y="0.5" width="13" height="11" fill="#d8d8d8" stroke="#1a1a2a" stroke-width="1"/><polygon points="13,1 13,11 3,11" fill="#b8b8b8"/></svg>
<svg style="left:1670px;top:108px" width="9" height="7" viewBox="0 0 9 7"><polygon points="0,0 9,0 4.5,7" fill="#dedede"/></svg>
<div style="left:858px;top:126px;width:823px;height:580px;background:#3a3a3a"></div>
<div style="left:857px;top:126px;width:824px;height:47px;background:linear-gradient(#4a4a4a,#3c3c3c 60%,#3a3a3a)"></div>
<div style="left:1681px;top:126px;width:4px;height:580px;background:#3a3a3a"></div>
<svg style="left:864px;top:135px" width="66" height="32" viewBox="0 0 66 32"><defs><linearGradient id="garr" x1="0" y1="0" x2="0" y2="1"><stop offset="0" stop-color="#f0f0f0"/><stop offset="1" stop-color="#9a9a9a"/></linearGradient>
    <linearGradient id="garr2" x1="0" y1="0" x2="0" y2="1"><stop offset="0" stop-color="#c8c8c8"/><stop offset="1" stop-color="#7a7a7a"/></linearGradient></defs>
    <polygon points="1,13 12,2 12,8 26,8 26,19 12,19 12,25" fill="url(#garr)" stroke="#1a1a2a" stroke-width="1.3"/>
    <polygon points="22,22 27,26 22,30" fill="#9a9a9a"/>
    <polygon points="61,13 50,2 50,8 36,8 36,19 50,19 50,25" fill="url(#garr2)" stroke="#1a1a2a" stroke-width="1.3"/></svg>
<div style="left:941px;top:128px;width:660px;height:42px;background:#3c3c3c;border:1px solid #000;box-shadow:inset 1px 1px 0 #5a5a5a"></div>
<div style="left:1582px;top:129px;width:18px;height:40px;background:#353535"></div>
<svg style="left:1587px;top:144px" width="8" height="8" viewBox="0 0 8 8"><polygon points="0,0 8,0 4.0,8" fill="#8a8a8a"/></svg>
<svg style="left:948px;top:130px" width="35.0" height="35.0" viewBox="0 0 35.0 35.0"><defs><clipPath id="cb948130"><circle cx="16.5" cy="16.5" r="15.5"/></clipPath>
    <radialGradient id="gsbr" cx="0.4" cy="0.3" r="0.7"><stop offset="0" stop-color="#f07070"/><stop offset="0.6" stop-color="#cc1414"/><stop offset="1" stop-color="#901010"/></radialGradient>
    <radialGradient id="gsbb" cx="0.3" cy="0.3" r="0.9"><stop offset="0" stop-color="#5a8ad8"/><stop offset="1" stop-color="#1a3a90"/></radialGradient></defs>
    <ellipse cx="18" cy="31" rx="12" ry="2.5" fill="#1a1a1a" opacity="0.5"/>
    <g clip-path="url(#cb948130)"><rect x="0" y="0" width="34" height="34" fill="url(#gsbr)"/>
    <path d="M0,25 Q14,20 34,4 L34,34 L0,34 Z" fill="#ececec"/>
    <path d="M8,34 Q22,28 34,14 L34,34 Z" fill="url(#gsbb)"/></g>
    <circle cx="16.5" cy="16.5" r="15.5" fill="none" stroke="#222" stroke-width="0.8" opacity="0.5"/></svg>
<span class="t" style="left:987.00px;top:136.00px;font-size:19.18px;font-family:'Liberation Sans',sans-serif;font-weight:normal;font-style:normal;color:#d8d8d8;transform:scaleX(1.0452);">shop</span>
<svg style="left:1613px;top:135px" width="30" height="28" viewBox="0 0 30 28"><ellipse cx="16" cy="23" rx="11" ry="2.5" fill="#222" opacity="0.6"/><polygon points="1,13 12,11 12,15" fill="#ddd"/><polygon points="12,8 20,10 20,16 12,18" fill="#c8c8c8" stroke="#444" stroke-width="0.8"/><rect x="20" y="4" width="6" height="18" fill="#e0e0e0" stroke="#444" stroke-width="0.8"/></svg>
<svg style="left:1649px;top:135px" width="30" height="30" viewBox="0 0 30 30"><circle cx="15" cy="15" r="13" fill="none" stroke="#6a8ccc" stroke-width="2.5"/><circle cx="15" cy="15" r="8" fill="none" stroke="#6a8ccc" stroke-width="2"/><circle cx="15" cy="15" r="3.2" fill="#3a70d0"/></svg>
<div style="left:858px;top:172px;width:823px;height:2px;background:#151515"></div>
<svg style="left:865px;top:180px" width="33" height="33" viewBox="0 0 33 33"><defs><clipPath id="tcla"><polygon points="1.5,5 11,12 10.5,28.5 3,19"/></clipPath><clipPath id="tcra"><polygon points="11,12 27,8 26,22.5 10.5,28.5"/></clipPath><clipPath id="tcta"><polygon points="1.5,5 16,1.5 27,8 11,12"/></clipPath>
<linearGradient id="tgla" x1="0" y1="0" x2="0" y2="1"><stop offset="0" stop-color="#f8b020"/><stop offset="1" stop-color="#e88010"/></linearGradient>
<linearGradient id="tgra" x1="0" y1="0" x2="1" y2="0"><stop offset="0" stop-color="#f07810"/><stop offset="1" stop-color="#e05808"/></linearGradient></defs>
<g transform="scale(1.0)">
<polygon points="1.5,5 16,1.5 27,8 11,12" fill="#f8b030"/><polygon points="1.5,5 11,12 10.5,28.5 3,19" fill="url(#tgla)"/><polygon points="11,12 27,8 26,22.5 10.5,28.5" fill="url(#tgra)"/>
<g clip-path="url(#tcla)"><path d="M3.5,6 Q4.5,14 3.0,20 T4.0,27" stroke="#0a0500" stroke-width="1.3" fill="none"/><path d="M6,8 Q7,16 5.5,22 T6.5,27" stroke="#0a0500" stroke-width="1.3" fill="none"/><path d="M8.5,10 Q9.5,18 8.0,24 T9.0,27" stroke="#0a0500" stroke-width="1.3" fill="none"/><path d="M13.5,6 Q14.7,15 13.2,21 T13.9,28" stroke="#0a0500" stroke-width="1.4" fill="none"/><path d="M16.5,6 Q17.7,15 16.2,21 T16.9,28" stroke="#0a0500" stroke-width="1.4" fill="none"/><path d="M19.5,6 Q20.7,15 19.2,21 T19.9,28" stroke="#0a0500" stroke-width="1.4" fill="none"/><path d="M22.5,6 Q23.7,15 22.2,21 T22.9,28" stroke="#0a0500" stroke-width="1.4" fill="none"/><path d="M25,6 Q26.2,15 24.7,21 T25.4,28" stroke="#0a0500" stroke-width="1.4" fill="none"/></g><g clip-path="url(#tcra)"><path d="M3.5,6 Q4.5,14 3.0,20 T4.0,27" stroke="#0a0500" stroke-width="1.3" fill="none"/><path d="M6,8 Q7,16 5.5,22 T6.5,27" stroke="#0a0500" stroke-width="1.3" fill="none"/><path d="M8.5,10 Q9.5,18 8.0,24 T9.0,27" stroke="#0a0500" stroke-width="1.3" fill="none"/><path d="M13.5,6 Q14.7,15 13.2,21 T13.9,28" stroke="#0a0500" stroke-width="1.4" fill="none"/><path d="M16.5,6 Q17.7,15 16.2,21 T16.9,28" stroke="#0a0500" stroke-width="1.4" fill="none"/><path d="M19.5,6 Q20.7,15 19.2,21 T19.9,28" stroke="#0a0500" stroke-width="1.4" fill="none"/><path d="M22.5,6 Q23.7,15 22.2,21 T22.9,28" stroke="#0a0500" stroke-width="1.4" fill="none"/><path d="M25,6 Q26.2,15 24.7,21 T25.4,28" stroke="#0a0500" stroke-width="1.4" fill="none"/></g><g clip-path="url(#tcta)"><path d="M4,4.5 L14,11.2" stroke="#0a0500" stroke-width="1.2"/><path d="M8,3.6 L18,10.299999999999999" stroke="#0a0500" stroke-width="1.2"/><path d="M12,2.7 L22,9.399999999999999" stroke="#0a0500" stroke-width="1.2"/><path d="M16,1.7999999999999998 L26,8.5" stroke="#0a0500" stroke-width="1.2"/></g>
<polygon points="1.5,5 16,1.5 27,8 26,22.5 10.5,28.5 3,19" fill="none" stroke="#1a0a00" stroke-width="0.8"/></g><polygon points="21,26 30,26 25.5,31" fill="#8a8a8a"/></svg>
<span class="t" style="left:899.00px;top:186.14px;font-size:19.60px;font-family:'Liberation Sans',sans-serif;font-weight:bold;font-style:normal;color:#dadada;transform:scaleX(1.1336);">Material Shader Builder</span>
<div style="left:1154px;top:181px;width:383px;height:29px;background:#121212"></div>
<span class="t" style="left:1159.00px;top:186.91px;font-size:20.24px;font-family:'Liberation Mono',monospace;font-weight:normal;font-style:normal;color:#f2f2f2;transform:scaleX(0.9070);">billowysmoke</span>
<svg style="left:1540px;top:181px" width="34" height="32" viewBox="0 0 34 32"><g transform="translate(0.8,0.9)"><path d="M14.6,14.5 L24.02,18.40 M14.6,14.5 L18.50,23.92 M14.6,14.5 L10.70,23.92 M14.6,14.5 L5.18,18.40 M14.6,14.5 L5.18,10.60 M14.6,14.5 L10.70,5.08 M14.6,14.5 L18.50,5.08 M14.6,14.5 L24.02,10.60 " stroke="#000" stroke-width="7.2" stroke-linecap="round"/><circle cx="14.6" cy="14.5" r="8" fill="#000"/></g><path d="M14.6,14.5 L24.02,18.40 M14.6,14.5 L18.50,23.92 M14.6,14.5 L10.70,23.92 M14.6,14.5 L5.18,18.40 M14.6,14.5 L5.18,10.60 M14.6,14.5 L10.70,5.08 M14.6,14.5 L18.50,5.08 M14.6,14.5 L24.02,10.60 " stroke="#141414" stroke-width="6.6" stroke-linecap="round"/><circle cx="14.6" cy="14.5" r="7.6" fill="#141414"/><path d="M14.6,14.5 L24.02,18.40 M14.6,14.5 L18.50,23.92 M14.6,14.5 L10.70,23.92 M14.6,14.5 L5.18,18.40 M14.6,14.5 L5.18,10.60 M14.6,14.5 L10.70,5.08 M14.6,14.5 L18.50,5.08 M14.6,14.5 L24.02,10.60 " stroke="#e2e2e2" stroke-width="4.6" stroke-linecap="round"/><circle cx="14.6" cy="14.5" r="6.8" fill="#e2e2e2"/><circle cx="14.6" cy="14.5" r="3.4" fill="#3a3a3a" stroke="#111" stroke-width="1.3"/><polygon points="22,25 32,25 27,30" fill="#9a9a9a"/></svg>
<svg style="left:1578px;top:181px" width="34" height="31" viewBox="0 0 34 31"><path d="M6,2 L12,2 L10,11 L17,11 L19,2 L25,2 L20,24 L14,24 L16,15 L9,15 L7,24 L1,24 Z" fill="#0a1a40" stroke="#e8e8e8" stroke-width="1.6" stroke-linejoin="round"/><polygon points="22,25 32,25 27,30" fill="#9a9a9a"/></svg>
<svg style="left:1613px;top:180px" width="28" height="28" viewBox="0 0 28 28"><circle cx="13" cy="13" r="11.5" fill="#2a2a2a" stroke="#e8e8e8" stroke-width="2"/><circle cx="14" cy="7" r="1.8" fill="#eee"/><path d="M12,11 L15,11 L13,20 L15,20" stroke="#eee" stroke-width="2.4" fill="none"/></svg>
<svg style="left:1649px;top:180px" width="28" height="28" viewBox="0 0 28 28"><circle cx="13" cy="13" r="11.5" fill="#2a2a2a" stroke="#e8e8e8" stroke-width="2"/><path d="M9,10 Q9,5.5 13,5.5 Q17,5.5 17,9.5 Q17,12 13.5,13.5 L13.5,16" stroke="#eee" stroke-width="2.4" fill="none"/><circle cx="13.5" cy="19.5" r="1.6" fill="#eee"/></svg>
<div style="left:858px;top:212px;width:823px;height:2px;background:#151515"></div>
<div style="left:857px;top:214px;width:4px;height:492px;background:#3a3a3a"></div>
<div style="left:861px;top:214px;width:1px;height:492px;background:#111"></div>
<span class="t" style="left:921.01px;top:229.98px;font-size:19.55px;font-family:'Liberation Sans',sans-serif;font-weight:normal;font-style:normal;color:#cfcfcf;transform:scaleX(1.0497);">Temperature Field</span>
<div style="left:1110px;top:226px;width:498px;height:27px;background:#121212"></div>
<span class="t" style="left:1113.00px;top:231.21px;font-size:20.24px;font-family:'Liberation Mono',monospace;font-weight:bold;font-style:normal;color:#f4f4f4;transform:scaleX(0.9068);">density</span>
<div style="left:1610px;top:220px;width:35px;height:35px;background:linear-gradient(#434343,#373737);border:1px solid #252525"></div>
<svg style="left:1624px;top:234px" width="8" height="7" viewBox="0 0 8 7"><polygon points="0,0 8,0 4.0,7" fill="#8a8a8a"/></svg>
<span class="t" style="left:1006.00px;top:272.40px;font-size:19.53px;font-family:'Liberation Sans',sans-serif;font-weight:normal;font-style:normal;color:#cfcfcf;transform:scaleX(1.0349);">Emission</span>
<div style="left:1110px;top:263px;width:121px;height:37px;background:#121212"></div>
<span class="t" style="left:1113.00px;top:273.61px;font-size:20.24px;font-family:'Liberation Mono',monospace;font-weight:normal;font-style:normal;color:#f4f4f4;transform:scaleX(0.9070);">10</span>
<div style="left:1238px;top:279px;width:404px;height:4px;background:#101820"></div>
<div style="left:1238px;top:280px;width:404px;height:2px;background:#1c4a90"></div>
<div style="left:1641px;top:262px;width:7px;height:37px;background:#2a2a2a;border:1px solid #8a8a8a;border-radius:2px"></div>
<div style="left:1655px;top:214px;width:26px;height:424px;background:#262626"></div>
<div style="left:1671px;top:214px;width:1px;height:424px;background:#1e1e1e"></div>
<div style="left:1657px;top:282px;width:22px;height:173px;background:linear-gradient(90deg,#3e3e3e,#525252 50%,#4a4a4a);border-top:1px solid #5a5a5a"></div>
<svg style="left:1663px;top:362px" width="10" height="12" viewBox="0 0 10 12"><rect x="0" y="0" width="2" height="2" fill="#111"/><rect x="3" y="0" width="2" height="2" fill="#111"/><rect x="6" y="0" width="2" height="2" fill="#111"/><rect x="9" y="0" width="2" height="2" fill="#111"/><rect x="0" y="3" width="2" height="2" fill="#111"/><rect x="3" y="3" width="2" height="2" fill="#111"/><rect x="6" y="3" width="2" height="2" fill="#111"/><rect x="9" y="3" width="2" height="2" fill="#111"/><rect x="0" y="6" width="2" height="2" fill="#111"/><rect x="3" y="6" width="2" height="2" fill="#111"/><rect x="6" y="6" width="2" height="2" fill="#111"/><rect x="9" y="6" width="2" height="2" fill="#111"/><rect x="0" y="9" width="2" height="2" fill="#111"/><rect x="3" y="9" width="2" height="2" fill="#111"/><rect x="6" y="9" width="2" height="2" fill="#111"/><rect x="9" y="9" width="2" height="2" fill="#111"/></svg>
<div style="left:1656px;top:638px;width:25px;height:33px;background:linear-gradient(90deg,#474747,#3e3e3e);border:1px solid #1e1e1e"></div>
<div style="left:1656px;top:671px;width:25px;height:33px;background:linear-gradient(90deg,#474747,#3e3e3e);border:1px solid #1e1e1e"></div>
<svg style="left:1664px;top:653px" width="7" height="6" viewBox="0 0 7 6"><polygon points="0,6 7,6 3.5,0" fill="#8a8a8a"/></svg>
<svg style="left:1664px;top:683px" width="7" height="6" viewBox="0 0 7 6"><polygon points="0,0 7,0 3.5,6" fill="#8a8a8a"/></svg>
<span class="t" style="left:877.40px;top:313.03px;font-size:19.73px;font-family:'Liberation Sans',sans-serif;font-weight:normal;font-style:normal;color:#cfcfcf;transform:scaleX(1.0532);">Map Temperature to Emission Color</span>
<div style="left:874px;top:336px;width:770px;height:113px;background:#3a3a3a;border:1px solid #151515;border-right:2px solid #151515;border-bottom:2px solid #151515"></div>
<div style="left:882px;top:343px;width:35px;height:36px;background:linear-gradient(#4a4a4a,#3a3a3a);border:1px solid #222"></div>
<div style="left:917px;top:343px;width:35px;height:36px;background:linear-gradient(#4a4a4a,#3a3a3a);border:1px solid #222"></div>
<svg style="left:893px;top:354px" width="14" height="14" viewBox="0 0 14 14"><path d="M2,2 L12,12 M12,2 L2,12" stroke="#e8e8e8" stroke-width="3"/></svg>
<svg style="left:922px;top:346px" width="26" height="26" viewBox="0 0 26 26"><path d="M9.5,1 H15.5 V9.5 H24.5 V15.5 H15.5 V24.5 H9.5 V15.5 H1 V9.5 H9.5 Z" fill="#e2e2e2" stroke="#1a1a2a" stroke-width="1.2"/></svg>
<svg style="left:890px;top:419px" width="14" height="17" viewBox="0 0 14 17"><polygon points="3,2 13,9 3,16" fill="#111"/><polygon points="1,0 11,7 1,14" fill="#f0f0f0"/></svg>
<div style="left:970px;top:342px;width:655px;height:70px;background:linear-gradient(90deg,#100000 0px,#3a0000 40px,#7a0000 110px,#a00000 170px,#b40000 206px,#d06010 235px,#f0b000 299px,#f8f000 334px,#ffffff 360px,#ffffff 655px)"></div>
<div style="left:970px;top:342px;width:1px;height:64px;background:#f0f0f0"></div>
<svg style="left:958.5px;top:406px" width="26" height="36" viewBox="0 0 26 36"><polygon points="13,1 25,12 25,34 1,34 1,12" fill="#464646" stroke="#0e0e0e" stroke-width="1.2" stroke-linejoin="miter"/><rect x="4" y="14" width="18" height="17" fill="#000" stroke="#0e0e0e" stroke-width="1"/></svg>
<svg style="left:1163.4px;top:406px" width="26" height="36" viewBox="0 0 26 36"><polygon points="13,1 25,12 25,34 1,34 1,12" fill="#464646" stroke="#0e0e0e" stroke-width="1.2" stroke-linejoin="miter"/><rect x="4" y="14" width="18" height="17" fill="#b00000" stroke="#0e0e0e" stroke-width="1"/></svg>
<svg style="left:1257px;top:406px" width="26" height="36" viewBox="0 0 26 36"><polygon points="13,1 25,12 25,34 1,34 1,12" fill="#464646" stroke="#0e0e0e" stroke-width="1.2" stroke-linejoin="miter"/><rect x="4" y="14" width="18" height="17" fill="#f0b000" stroke="#0e0e0e" stroke-width="1"/></svg>
<svg style="left:1291px;top:406px" width="26" height="36" viewBox="0 0 26 36"><polygon points="13,1 25,12 25,34 1,34 1,12" fill="#464646" stroke="#0e0e0e" stroke-width="1.2" stroke-linejoin="miter"/><rect x="4" y="14" width="18" height="17" fill="#f6f000" stroke="#0e0e0e" stroke-width="1"/></svg>
<svg style="left:1317.4px;top:406px" width="26" height="36" viewBox="0 0 26 36"><polygon points="13,1 25,12 25,34 1,34 1,12" fill="#464646" stroke="#0e0e0e" stroke-width="1.2" stroke-linejoin="miter"/><rect x="4" y="14" width="18" height="17" fill="#ffffff" stroke="#0e0e0e" stroke-width="1"/></svg>
<span class="t" style="left:877.40px;top:464.03px;font-size:19.73px;font-family:'Liberation Sans',sans-serif;font-weight:normal;font-style:normal;color:#cfcfcf;transform:scaleX(1.0631);">Map Temperature to Density Color</span>
<div style="left:874px;top:487px;width:770px;height:113px;background:#3a3a3a;border:1px solid #151515;border-right:2px solid #151515;border-bottom:2px solid #151515"></div>
<div style="left:882px;top:494px;width:35px;height:36px;background:linear-gradient(#4a4a4a,#3a3a3a);border:1px solid #222"></div>
<div style="left:917px;top:494px;width:35px;height:36px;background:linear-gradient(#4a4a4a,#3a3a3a);border:1px solid #222"></div>
<svg style="left:893px;top:505px" width="14" height="14" viewBox="0 0 14 14"><path d="M2,2 L12,12 M12,2 L2,12" stroke="#e8e8e8" stroke-width="3"/></svg>
<svg style="left:922px;top:497px" width="26" height="26" viewBox="0 0 26 26"><path d="M9.5,1 H15.5 V9.5 H24.5 V15.5 H15.5 V24.5 H9.5 V15.5 H1 V9.5 H9.5 Z" fill="#e2e2e2" stroke="#1a1a2a" stroke-width="1.2"/></svg>
<svg style="left:890px;top:570px" width="14" height="17" viewBox="0 0 14 17"><polygon points="3,2 13,9 3,16" fill="#111"/><polygon points="1,0 11,7 1,14" fill="#f0f0f0"/></svg>
<div style="left:970px;top:493px;width:655px;height:70px;background:#ffffff"></div>
<div style="left:970px;top:493px;width:1px;height:64px;background:#f0f0f0"></div>
<svg style="left:958.5px;top:557px" width="26" height="36" viewBox="0 0 26 36"><polygon points="13,1 25,12 25,34 1,34 1,12" fill="#464646" stroke="#0e0e0e" stroke-width="1.2" stroke-linejoin="miter"/><rect x="4" y="14" width="18" height="17" fill="#ffffff" stroke="#0e0e0e" stroke-width="1"/></svg>
<svg style="left:1610.6px;top:557px" width="26" height="36" viewBox="0 0 26 36"><polygon points="13,1 25,12 25,34 1,34 1,12" fill="#464646" stroke="#0e0e0e" stroke-width="2.5" stroke-linejoin="miter"/><rect x="4" y="14" width="18" height="17" fill="#ffffff" stroke="#0e0e0e" stroke-width="1"/></svg>
<div style="left:857px;top:705px;width:828px;height:1px;background:#111"></div>
<div style="left:857px;top:706px;width:828px;height:11px;background:linear-gradient(#555,#4a4a4a 50%,#3e3e3e)"></div>
<svg style="left:1213px;top:708px" width="8" height="5" viewBox="0 0 8 5"><polygon points="0,5 8,5 4.0,0" fill="#8a8a8a"/></svg>
<svg style="left:1256px;top:708px" width="36" height="6" viewBox="0 0 36 6"><rect x="0" y="0" width="1.6" height="1.6" fill="#9a9a9a"/><rect x="3" y="0" width="1.6" height="1.6" fill="#9a9a9a"/><rect x="6" y="0" width="1.6" height="1.6" fill="#9a9a9a"/><rect x="9" y="0" width="1.6" height="1.6" fill="#9a9a9a"/><rect x="12" y="0" width="1.6" height="1.6" fill="#9a9a9a"/><rect x="15" y="0" width="1.6" height="1.6" fill="#9a9a9a"/><rect x="18" y="0" width="1.6" height="1.6" fill="#9a9a9a"/><rect x="21" y="0" width="1.6" height="1.6" fill="#9a9a9a"/><rect x="24" y="0" width="1.6" height="1.6" fill="#9a9a9a"/><rect x="27" y="0" width="1.6" height="1.6" fill="#9a9a9a"/><rect x="30" y="0" width="1.6" height="1.6" fill="#9a9a9a"/><rect x="33" y="0" width="1.6" height="1.6" fill="#9a9a9a"/><rect x="0" y="3" width="1.6" height="1.6" fill="#9a9a9a"/><rect x="3" y="3" width="1.6" height="1.6" fill="#9a9a9a"/><rect x="6" y="3" width="1.6" height="1.6" fill="#9a9a9a"/><rect x="9" y="3" width="1.6" height="1.6" fill="#9a9a9a"/><rect x="12" y="3" width="1.6" height="1.6" fill="#9a9a9a"/><rect x="15" y="3" width="1.6" height="1.6" fill="#9a9a9a"/><rect x="18" y="3" width="1.6" height="1.6" fill="#9a9a9a"/><rect x="21" y="3" width="1.6" height="1.6" fill="#9a9a9a"/><rect x="24" y="3" width="1.6" height="1.6" fill="#9a9a9a"/><rect x="27" y="3" width="1.6" height="1.6" fill="#9a9a9a"/><rect x="30" y="3" width="1.6" height="1.6" fill="#9a9a9a"/><rect x="33" y="3" width="1.6" height="1.6" fill="#9a9a9a"/></svg>
<svg style="left:1321px;top:709px" width="8" height="5" viewBox="0 0 8 5"><polygon points="0,0 8,0 4.0,5" fill="#8a8a8a"/></svg>
<div style="left:857px;top:717px;width:828px;height:1px;background:#222"></div>
<svg style="left:848px;top:560px" width="5" height="8" viewBox="0 0 5 8"><polygon points="5,0 0,4.0 5,8" fill="#8a8a8a"/></svg>
<svg style="left:848px;top:598px" width="3" height="36" viewBox="0 0 3 36"><rect x="0" y="0" width="2" height="1.5" fill="#9a9a9a"/><rect x="0" y="3" width="2" height="1.5" fill="#9a9a9a"/><rect x="0" y="6" width="2" height="1.5" fill="#9a9a9a"/><rect x="0" y="9" width="2" height="1.5" fill="#9a9a9a"/><rect x="0" y="12" width="2" height="1.5" fill="#9a9a9a"/><rect x="0" y="15" width="2" height="1.5" fill="#9a9a9a"/><rect x="0" y="18" width="2" height="1.5" fill="#9a9a9a"/><rect x="0" y="21" width="2" height="1.5" fill="#9a9a9a"/><rect x="0" y="24" width="2" height="1.5" fill="#9a9a9a"/><rect x="0" y="27" width="2" height="1.5" fill="#9a9a9a"/><rect x="0" y="30" width="2" height="1.5" fill="#9a9a9a"/><rect x="0" y="33" width="2" height="1.5" fill="#9a9a9a"/></svg>
<svg style="left:848px;top:668px" width="5" height="8" viewBox="0 0 5 8"><polygon points="0,0 5,4.0 0,8" fill="#8a8a8a"/></svg>
<div style="left:857px;top:718px;width:828px;height:420px;background:#2e2e2e"></div>
<div style="left:857px;top:718px;width:824px;height:1px;background:#000"></div>
<div style="left:857px;top:719px;width:824px;height:28px;background:#2b2b2b"></div>
<div style="left:857px;top:719px;width:105px;height:30px;background:#474747"></div>
<span class="t" style="left:868.31px;top:726.17px;font-size:15.10px;font-family:'Liberation Sans',sans-serif;font-weight:normal;font-style:italic;color:#d6d6d6;transform:scaleX(1.0603);">/shop</span>
<svg style="left:943px;top:728px" width="10" height="10" viewBox="0 0 10 10"><path d="M1,1 L9,9 M9,1 L1,9" stroke="#e8e8e8" stroke-width="2.4" stroke-linecap="square"/></svg>
<div style="left:962px;top:720px;width:138px;height:27px;background:linear-gradient(90deg,#1a1a1a,#262626 3px,#2e2e2e 6px,#2e2e2e)"></div>
<span class="t" style="left:975.60px;top:726.17px;font-size:15.10px;font-family:'Liberation Sans',sans-serif;font-weight:normal;font-style:normal;color:#d2d2d2;transform:scaleX(1.0133);">Tree View</span>
<svg style="left:1080px;top:728px" width="10" height="10" viewBox="0 0 10 10"><path d="M1,1 L9,9 M9,1 L1,9" stroke="#e8e8e8" stroke-width="2.4" stroke-linecap="square"/></svg>
<div style="left:1100px;top:720px;width:181px;height:27px;background:linear-gradient(90deg,#1a1a1a,#262626 3px,#2e2e2e 6px,#2e2e2e)"></div>
<span class="t" style="left:1112.50px;top:726.17px;font-size:15.10px;font-family:'Liberation Sans',sans-serif;font-weight:normal;font-style:normal;color:#d2d2d2;transform:scaleX(1.0655);">Material Palette</span>
<svg style="left:1261px;top:728px" width="10" height="10" viewBox="0 0 10 10"><path d="M1,1 L9,9 M9,1 L1,9" stroke="#e8e8e8" stroke-width="2.4" stroke-linecap="square"/></svg>
<div style="left:1281px;top:720px;width:171px;height:27px;background:linear-gradient(90deg,#1a1a1a,#262626 3px,#2e2e2e 6px,#2e2e2e)"></div>
<span class="t" style="left:1293.50px;top:726.17px;font-size:15.10px;font-family:'Liberation Sans',sans-serif;font-weight:normal;font-style:normal;color:#d2d2d2;transform:scaleX(1.0401);">Asset Browser</span>
<svg style="left:1431px;top:728px" width="10" height="10" viewBox="0 0 10 10"><path d="M1,1 L9,9 M9,1 L1,9" stroke="#e8e8e8" stroke-width="2.4" stroke-linecap="square"/></svg>
<svg style="left:1461px;top:727px" width="13" height="13" viewBox="0 0 13 13"><rect x="5.0" y="0" width="3" height="13" fill="#e6e6e6"/><rect x="0" y="5.0" width="13" height="3" fill="#e6e6e6"/></svg>
<svg style="left:1645px;top:726px" width="14" height="12" viewBox="0 0 14 12"><rect x="0.5" y="0.5" width="13" height="11" fill="#d8d8d8" stroke="#1a1a2a" stroke-width="1"/><polygon points="13,1 13,11 3,11" fill="#b8b8b8"/></svg>
<svg style="left:1670px;top:730px" width="9" height="7" viewBox="0 0 9 7"><polygon points="0,0 9,0 4.5,7" fill="#dedede"/></svg>
<div style="left:857px;top:746px;width:828px;height:47px;background:linear-gradient(#4a4a4a,#3c3c3c 60%,#3a3a3a)"></div>
<svg style="left:864px;top:755px" width="66" height="32" viewBox="0 0 66 32"><defs><linearGradient id="garr" x1="0" y1="0" x2="0" y2="1"><stop offset="0" stop-color="#f0f0f0"/><stop offset="1" stop-color="#9a9a9a"/></linearGradient>
    <linearGradient id="garr2" x1="0" y1="0" x2="0" y2="1"><stop offset="0" stop-color="#c8c8c8"/><stop offset="1" stop-color="#7a7a7a"/></linearGradient></defs>
    <polygon points="1,13 12,2 12,8 26,8 26,19 12,19 12,25" fill="url(#garr)" stroke="#1a1a2a" stroke-width="1.3"/>
    <polygon points="22,22 27,26 22,30" fill="#9a9a9a"/>
    <polygon points="61,13 50,2 50,8 36,8 36,19 50,19 50,25" fill="url(#garr2)" stroke="#1a1a2a" stroke-width="1.3"/></svg>
<div style="left:941px;top:748px;width:606px;height:42px;background:#3c3c3c;border:1px solid #000;box-shadow:inset 1px 1px 0 #5a5a5a"></div>
<div style="left:1528px;top:749px;width:18px;height:40px;background:#353535"></div>
<svg style="left:1535px;top:765px" width="8" height="8" viewBox="0 0 8 8"><polygon points="0,0 8,0 4.0,8" fill="#8a8a8a"/></svg>
<svg style="left:948px;top:750px" width="35.0" height="35.0" viewBox="0 0 35.0 35.0"><defs><clipPath id="cb948750"><circle cx="16.5" cy="16.5" r="15.5"/></clipPath>
    <radialGradient id="gsbr" cx="0.4" cy="0.3" r="0.7"><stop offset="0" stop-color="#f07070"/><stop offset="0.6" stop-color="#cc1414"/><stop offset="1" stop-color="#901010"/></radialGradient>
    <radialGradient id="gsbb" cx="0.3" cy="0.3" r="0.9"><stop offset="0" stop-color="#5a8ad8"/><stop offset="1" stop-color="#1a3a90"/></radialGradient></defs>
    <ellipse cx="18" cy="31" rx="12" ry="2.5" fill="#1a1a1a" opacity="0.5"/>
    <g clip-path="url(#cb948750)"><rect x="0" y="0" width="34" height="34" fill="url(#gsbr)"/>
    <path d="M0,25 Q14,20 34,4 L34,34 L0,34 Z" fill="#ececec"/>
    <path d="M8,34 Q22,28 34,14 L34,34 Z" fill="url(#gsbb)"/></g>
    <circle cx="16.5" cy="16.5" r="15.5" fill="none" stroke="#222" stroke-width="0.8" opacity="0.5"/></svg>
<span class="t" style="left:987.00px;top:755.90px;font-size:19.18px;font-family:'Liberation Sans',sans-serif;font-weight:normal;font-style:normal;color:#d8d8d8;transform:scaleX(1.0452);">shop</span>
<svg style="left:1559px;top:755px" width="30" height="28" viewBox="0 0 30 28"><ellipse cx="16" cy="23" rx="11" ry="2.5" fill="#222" opacity="0.6"/><polygon points="1,13 12,11 12,15" fill="#ddd"/><polygon points="12,8 20,10 20,16 12,18" fill="#c8c8c8" stroke="#444" stroke-width="0.8"/><rect x="20" y="4" width="6" height="18" fill="#e0e0e0" stroke="#444" stroke-width="0.8"/></svg>
<svg style="left:1595px;top:755px" width="30" height="30" viewBox="0 0 30 30"><circle cx="15" cy="15" r="13" fill="none" stroke="#6a8ccc" stroke-width="2.5"/><circle cx="15" cy="15" r="8" fill="none" stroke="#6a8ccc" stroke-width="2"/><circle cx="15" cy="15" r="3.2" fill="#3a70d0"/></svg>
<svg style="left:1649px;top:756px" width="34" height="32" viewBox="0 0 34 32"><g transform="translate(0.8,0.9)"><path d="M14.6,14.5 L24.02,18.40 M14.6,14.5 L18.50,23.92 M14.6,14.5 L10.70,23.92 M14.6,14.5 L5.18,18.40 M14.6,14.5 L5.18,10.60 M14.6,14.5 L10.70,5.08 M14.6,14.5 L18.50,5.08 M14.6,14.5 L24.02,10.60 " stroke="#000" stroke-width="7.2" stroke-linecap="round"/><circle cx="14.6" cy="14.5" r="8" fill="#000"/></g><path d="M14.6,14.5 L24.02,18.40 M14.6,14.5 L18.50,23.92 M14.6,14.5 L10.70,23.92 M14.6,14.5 L5.18,18.40 M14.6,14.5 L5.18,10.60 M14.6,14.5 L10.70,5.08 M14.6,14.5 L18.50,5.08 M14.6,14.5 L24.02,10.60 " stroke="#141414" stroke-width="6.6" stroke-linecap="round"/><circle cx="14.6" cy="14.5" r="7.6" fill="#141414"/><path d="M14.6,14.5 L24.02,18.40 M14.6,14.5 L18.50,23.92 M14.6,14.5 L10.70,23.92 M14.6,14.5 L5.18,18.40 M14.6,14.5 L5.18,10.60 M14.6,14.5 L10.70,5.08 M14.6,14.5 L18.50,5.08 M14.6,14.5 L24.02,10.60 " stroke="#e2e2e2" stroke-width="4.6" stroke-linecap="round"/><circle cx="14.6" cy="14.5" r="6.8" fill="#e2e2e2"/><circle cx="14.6" cy="14.5" r="3.4" fill="#3a3a3a" stroke="#111" stroke-width="1.3"/><polygon points="22,25 32,25 27,30" fill="#9a9a9a"/></svg>
<div style="left:857px;top:792px;width:828px;height:2px;background:#151515"></div>
<div style="left:857px;top:794px;width:824px;height:51px;background:#2e2e2e"></div>
<div style="left:859px;top:795px;width:16px;height:48px;background:linear-gradient(90deg,#404040,#484848 40%,#3c3c3c)"></div>
<svg style="left:864px;top:800px" width="7" height="6" viewBox="0 0 7 6"><polygon points="0,6 7,6 3.5,0" fill="#000"/></svg>
<div style="left:875px;top:795px;width:2px;height:48px;background:#1a1a1a"></div>
<div style="left:877px;top:795px;width:806px;height:1px;background:#4a4a4a"></div>
<div style="left:857px;top:843px;width:826px;height:2px;background:#151515"></div>
<svg style="left:890px;top:805px" width="22" height="28" viewBox="0 0 22 28"><g fill="none" stroke="#b8c8b0" stroke-width="1.5"><path d="M4,4 L4,24 M4,10 L14,10 M4,17 L14,17 M4,24 L14,24"/></g><rect x="1" y="1" width="5" height="5" fill="#e8e8e8"/><rect x="14" y="8" width="5" height="4" fill="#c0c0c0"/><rect x="14" y="15" width="5" height="4" fill="#c0c0c0"/><rect x="14" y="22" width="5" height="4" fill="#c0c0c0"/></svg>
<svg style="left:924px;top:806px" width="25" height="27" viewBox="0 0 25 27"><rect x="1" y="1" width="22" height="24" fill="#c8d4c8" stroke="#555" stroke-width="0.8"/><g fill="#f4f4f4"><rect x="2" y="3" width="20" height="3"/><rect x="2" y="9" width="20" height="3"/><rect x="2" y="15" width="20" height="3"/><rect x="2" y="21" width="20" height="3"/></g></svg>
<svg style="left:959px;top:805px" width="30" height="29" viewBox="0 0 30 29"><rect x="0" y="0" width="28" height="28" fill="#8a8a8a"/><rect x="0" y="12" width="14" height="16" fill="#f0f0f0" stroke="#333" stroke-width="0.8"/><g fill="#222"><rect x="3" y="15" width="3" height="2"/><rect x="3" y="19" width="3" height="2"/><rect x="3" y="23" width="3" height="2"/><rect x="8" y="17" width="4" height="2"/><rect x="8" y="21" width="4" height="2"/></g></svg>
<svg style="left:995px;top:806px" width="24" height="25" viewBox="0 0 24 25"><rect x="0.5" y="0.5" width="23" height="23" fill="#f0f0f0" stroke="#444"/><rect x="2" y="2" width="6" height="6" fill="#e02020"/><rect x="9" y="2" width="6" height="6" fill="#f07010"/><rect x="16" y="2" width="6" height="6" fill="#e0c020"/><rect x="2" y="9" width="6" height="6" fill="#2040a0"/><rect x="9" y="9" width="6" height="6" fill="#30b030"/><rect x="16" y="9" width="6" height="6" fill="#6090d0"/><rect x="2" y="16" width="6" height="6" fill="#111"/><rect x="9" y="16" width="6" height="6" fill="#888"/><rect x="16" y="16" width="6" height="6" fill="#b0c8b0"/></svg>
<svg style="left:1045px;top:806px" width="27" height="26" viewBox="0 0 27 26"><rect x="0.5" y="0.5" width="26" height="25" fill="#8a8a8a" stroke="#222"/><rect x="3" y="5" width="12" height="6" fill="#f0f0f0" stroke="#111"/><rect x="11" y="15" width="12" height="6" fill="#f0f0f0" stroke="#111"/></svg>
<svg style="left:1081px;top:805px" width="28" height="28" viewBox="0 0 28 28"><path d="M1,1 L26,1 L26,18 L18,26 L1,26 Z" fill="#f0e070" stroke="#222" stroke-width="1"/><path d="M26,18 L18,18 L18,26 Z" fill="#c8b040"/><g fill="#222"><rect x="5" y="6" width="16" height="2"/><rect x="5" y="11" width="16" height="2"/><rect x="5" y="16" width="10" height="2"/></g></svg>
<svg style="left:1118px;top:805px" width="30" height="26" viewBox="0 0 30 26"><polygon points="3,9 15,3 27,9 25,22 5,22" fill="#d89040" stroke="#7a4010" stroke-width="1"/><polygon points="1,10 15,4 29,10 15,14" fill="#f0b060" stroke="#7a4010" stroke-width="1"/><rect x="9" y="14" width="12" height="4" fill="#c07020"/></svg>
<svg style="left:1378px;top:803px" width="30" height="30" viewBox="0 0 30 30"><path d="M12,2 L12,28" stroke="#5a8ad0" stroke-width="1.5"/><rect x="6" y="9" width="12" height="5" fill="#f0f0f0" stroke="#111"/><rect x="6" y="17" width="12" height="5" fill="#f0f0f0" stroke="#111"/></svg>
<svg style="left:1412px;top:803px" width="30" height="30" viewBox="0 0 30 30"><path d="M2,15 L28,15" stroke="#5a8ad0" stroke-width="1.5"/><rect x="3" y="12" width="9" height="5" fill="#f0f0f0" stroke="#111"/><rect x="17" y="12" width="9" height="5" fill="#f0f0f0" stroke="#111"/></svg>
<svg style="left:1449px;top:803px" width="30" height="30" viewBox="0 0 30 30"><path d="M13,2 L13,28 M16,2 L16,28" stroke="#5a8ad0" stroke-width="1.5"/><rect x="2" y="7" width="9" height="5" fill="#f0f0f0" stroke="#111"/><rect x="18" y="19" width="9" height="5" fill="#f0f0f0" stroke="#111"/></svg>
<svg style="left:1485px;top:803px" width="30" height="30" viewBox="0 0 30 30"><path d="M2,13 L28,13 M2,17 L28,17" stroke="#5a8ad0" stroke-width="1.5"/><rect x="2" y="4" width="8" height="5" fill="#f0f0f0" stroke="#111"/><rect x="18" y="21" width="8" height="5" fill="#f0f0f0" stroke="#111"/></svg>
<svg style="left:1520px;top:803px" width="30" height="30" viewBox="0 0 30 30"><path d="M8,2 L8,28 M15,2 L15,28 M22,2 L22,28 M2,8 L28,8 M2,15 L28,15 M2,22 L28,22" stroke="#5a8ad0" stroke-width="1.5"/><rect x="3" y="5" width="8" height="5" fill="#f0f0f0" stroke="#111"/><rect x="17" y="20" width="8" height="5" fill="#f0f0f0" stroke="#111"/></svg>
<svg style="left:1556px;top:803px" width="30" height="30" viewBox="0 0 30 30"><path d="M8,2 L8,28 M15,2 L15,28 M22,2 L22,28 M2,8 L28,8 M2,15 L28,15 M2,22 L28,22" stroke="#5a8ad0" stroke-width="1.6"/></svg>
<svg style="left:1606px;top:804px" width="30" height="30" viewBox="0 0 30 30"><circle cx="12" cy="12" r="9" fill="#5a6468" stroke="#d8d8d8" stroke-width="2.5"/><path d="M18,18 L27,27" stroke="#d8d8d8" stroke-width="3.5" stroke-linecap="round"/></svg>
<svg style="left:1644px;top:805px" width="27" height="27" viewBox="0 0 27 27"><rect x="0.5" y="0.5" width="26" height="26" fill="#ececec" stroke="#333"/><rect x="1" y="1" width="25" height="4" fill="#9a9a9a"/><path d="M3,15 Q13,4 24,15 Q13,24 3,15 Z" fill="#fff" stroke="#111" stroke-width="1.2"/><circle cx="13" cy="14" r="4.5" fill="#111"/></svg>
<span class="t" style="left:1569.00px;top:852.54px;font-size:33.48px;font-family:'Liberation Sans',sans-serif;font-weight:bold;font-style:normal;color:#3a3a3a;transform:scaleX(0.8204);">Shaders</span>
<span class="t" style="left:1335.70px;top:1099.80px;font-size:32.00px;font-family:'Liberation Sans',sans-serif;font-weight:bold;font-style:normal;color:#3a3a3a;transform:scaleX(0.9133);">Non-Commercial Edition</span>
<span class="t" style="left:1120.63px;top:918.84px;font-size:31.36px;font-family:'Liberation Sans',sans-serif;font-weight:normal;font-style:normal;color:#7272f2;transform:scaleX(1.0722);">billowysmoke</span>
<div style="left:1115px;top:952px;width:207px;height:43px;background:#e4e400"></div>
<div style="left:1117px;top:954px;width:203px;height:39px;background:linear-gradient(#9e9e9e,#c4c4c4 50%,#dadada);border:1px solid #3a3a3a"></div>
<svg style="left:1124px;top:958px" width="30" height="30" viewBox="0 0 30 30"><defs><clipPath id="tcln"><polygon points="1.5,5 11,12 10.5,28.5 3,19"/></clipPath><clipPath id="tcrn"><polygon points="11,12 27,8 26,22.5 10.5,28.5"/></clipPath><clipPath id="tctn"><polygon points="1.5,5 16,1.5 27,8 11,12"/></clipPath>
<linearGradient id="tgln" x1="0" y1="0" x2="0" y2="1"><stop offset="0" stop-color="#f8b020"/><stop offset="1" stop-color="#e88010"/></linearGradient>
<linearGradient id="tgrn" x1="0" y1="0" x2="1" y2="0"><stop offset="0" stop-color="#f07810"/><stop offset="1" stop-color="#e05808"/></linearGradient></defs>
<g transform="scale(0.92)">
<polygon points="1.5,5 16,1.5 27,8 11,12" fill="#f8b030"/><polygon points="1.5,5 11,12 10.5,28.5 3,19" fill="url(#tgln)"/><polygon points="11,12 27,8 26,22.5 10.5,28.5" fill="url(#tgrn)"/>
<g clip-path="url(#tcln)"><path d="M3.5,6 Q4.5,14 3.0,20 T4.0,27" stroke="#0a0500" stroke-width="1.3" fill="none"/><path d="M6,8 Q7,16 5.5,22 T6.5,27" stroke="#0a0500" stroke-width="1.3" fill="none"/><path d="M8.5,10 Q9.5,18 8.0,24 T9.0,27" stroke="#0a0500" stroke-width="1.3" fill="none"/><path d="M13.5,6 Q14.7,15 13.2,21 T13.9,28" stroke="#0a0500" stroke-width="1.4" fill="none"/><path d="M16.5,6 Q17.7,15 16.2,21 T16.9,28" stroke="#0a0500" stroke-width="1.4" fill="none"/><path d="M19.5,6 Q20.7,15 19.2,21 T19.9,28" stroke="#0a0500" stroke-width="1.4" fill="none"/><path d="M22.5,6 Q23.7,15 22.2,21 T22.9,28" stroke="#0a0500" stroke-width="1.4" fill="none"/><path d="M25,6 Q26.2,15 24.7,21 T25.4,28" stroke="#0a0500" stroke-width="1.4" fill="none"/></g><g clip-path="url(#tcrn)"><path d="M3.5,6 Q4.5,14 3.0,20 T4.0,27" stroke="#0a0500" stroke-width="1.3" fill="none"/><path d="M6,8 Q7,16 5.5,22 T6.5,27" stroke="#0a0500" stroke-width="1.3" fill="none"/><path d="M8.5,10 Q9.5,18 8.0,24 T9.0,27" stroke="#0a0500" stroke-width="1.3" fill="none"/><path d="M13.5,6 Q14.7,15 13.2,21 T13.9,28" stroke="#0a0500" stroke-width="1.4" fill="none"/><path d="M16.5,6 Q17.7,15 16.2,21 T16.9,28" stroke="#0a0500" stroke-width="1.4" fill="none"/><path d="M19.5,6 Q20.7,15 19.2,21 T19.9,28" stroke="#0a0500" stroke-width="1.4" fill="none"/><path d="M22.5,6 Q23.7,15 22.2,21 T22.9,28" stroke="#0a0500" stroke-width="1.4" fill="none"/><path d="M25,6 Q26.2,15 24.7,21 T25.4,28" stroke="#0a0500" stroke-width="1.4" fill="none"/></g><g clip-path="url(#tctn)"><path d="M4,4.5 L14,11.2" stroke="#0a0500" stroke-width="1.2"/><path d="M8,3.6 L18,10.299999999999999" stroke="#0a0500" stroke-width="1.2"/><path d="M12,2.7 L22,9.399999999999999" stroke="#0a0500" stroke-width="1.2"/><path d="M16,1.7999999999999998 L26,8.5" stroke="#0a0500" stroke-width="1.2"/></g>
<polygon points="1.5,5 16,1.5 27,8 26,22.5 10.5,28.5 3,19" fill="none" stroke="#1a0a00" stroke-width="0.8"/></g></svg>
<div style="left:0px;top:1136px;width:1688px;height:2px;background:#151515"></div>
<div style="left:0px;top:1138px;width:1685px;height:78px;background:#2e2e2e"></div>
<div style="left:0px;top:1138px;width:17px;height:77px;background:linear-gradient(90deg,#3c3c3c,#4a4a4a 40%,#3e3e3e)"></div>
<div style="left:17px;top:1138px;width:2px;height:77px;background:#1c1c1c"></div>
<div style="left:19px;top:1138px;width:1666px;height:1px;background:#4a4a4a"></div>
<svg style="left:7px;top:1205px" width="6" height="5" viewBox="0 0 6 5"><polygon points="0,0 6,0 3.0,5" fill="#000"/></svg>
<div style="left:33px;top:1155px;width:48px;height:42px;background:linear-gradient(#4a4a4a,#3c3c3c);border:1px solid #1e1e1e;box-shadow:inset 0 1px 0 #555"></div>
<svg style="left:33px;top:1155px" width="48" height="42" viewBox="0 0 48 42"><rect x="4" y="12" width="6" height="18" fill="#dde0dc" stroke="#333" stroke-width="0.8"/><polygon points="25,11 11,21 25,31" fill="#dde0dc" stroke="#333" stroke-width="0.8"/><polygon points="40,12 27,21 40,30" fill="#dde0dc" stroke="#333" stroke-width="0.8"/></svg>
<div style="left:81px;top:1155px;width:48px;height:42px;background:linear-gradient(#4a4a4a,#3c3c3c);border:1px solid #1e1e1e;box-shadow:inset 0 1px 0 #555"></div>
<svg style="left:81px;top:1155px" width="48" height="42" viewBox="0 0 48 42"><rect x="12" y="12" width="7" height="18" fill="#6ac040" stroke="#1e4a10" stroke-width="1"/><rect x="14.5" y="14" width="2" height="14" fill="#b8f090"/><polygon points="36,11 21,21 36,31" fill="#dde0dc" stroke="#1a1a3a" stroke-width="1.2"/></svg>
<div style="left:129px;top:1155px;width:48px;height:42px;background:linear-gradient(#4a4a4a,#3c3c3c);border:1px solid #1e1e1e;box-shadow:inset 0 1px 0 #555"></div>
<svg style="left:129px;top:1155px" width="48" height="42" viewBox="0 0 48 42"><polygon points="35,9 14,21 35,33" fill="#dde0dc" stroke="#444" stroke-width="0.8"/></svg>
<div style="left:177px;top:1155px;width:48px;height:42px;background:#b8872a;border:1px solid #1e1e1e;box-shadow:inset 0 1px 0 #555"></div>
<svg style="left:177px;top:1155px" width="48" height="42" viewBox="0 0 48 42"><rect x="10" y="8" width="28" height="26" fill="#e4e8e4" stroke="#2a2a3a" stroke-width="1.5"/></svg>
<div style="left:225px;top:1155px;width:48px;height:42px;background:linear-gradient(#4a4a4a,#3c3c3c);border:1px solid #1e1e1e;box-shadow:inset 0 1px 0 #555"></div>
<svg style="left:225px;top:1155px" width="48" height="42" viewBox="0 0 48 42"><polygon points="13,9 34,21 13,33" fill="#dde0dc" stroke="#444" stroke-width="0.8"/></svg>
<div style="left:273px;top:1155px;width:48px;height:42px;background:linear-gradient(#4a4a4a,#3c3c3c);border:1px solid #1e1e1e;box-shadow:inset 0 1px 0 #555"></div>
<svg style="left:273px;top:1155px" width="48" height="42" viewBox="0 0 48 42"><polygon points="13,11 28,21 13,31" fill="#dde0dc" stroke="#1a1a3a" stroke-width="1.2"/><rect x="30" y="12" width="7" height="18" fill="#6ac040" stroke="#1e4a10" stroke-width="1"/><rect x="32.5" y="14" width="2" height="14" fill="#b8f090"/></svg>
<div style="left:336px;top:1163px;width:86px;height:28px;background:#121212;border:1px solid #262626"></div>
<span class="t" style="left:339.60px;top:1166.89px;font-size:20.13px;font-family:'Liberation Sans',sans-serif;font-weight:normal;font-style:normal;color:#f0f0f0;transform:scaleX(1.0796);">1</span>
<div style="left:423px;top:1162px;width:60px;height:30px;background:linear-gradient(#4a4a4a,#3c3c3c);border:1px solid #1e1e1e"></div>
<div style="left:452px;top:1163px;width:1px;height:28px;background:#1e1e1e"></div>
<div style="left:430px;top:1175px;width:16px;height:3px;background:#cfcfcf"></div>
<svg style="left:460px;top:1169px" width="15" height="15" viewBox="0 0 15 15"><rect x="6" y="0" width="3" height="15" fill="#cfcfcf"/><rect x="0" y="6" width="15" height="3" fill="#cfcfcf"/></svg>
<div style="left:498px;top:1164px;width:74px;height:27px;background:#121212;border:1px solid #262626"></div>
<span class="t" style="left:502.40px;top:1166.89px;font-size:20.13px;font-family:'Liberation Sans',sans-serif;font-weight:normal;font-style:normal;color:#f0f0f0;transform:scaleX(1.0796);">1</span>
<div style="left:576px;top:1142px;width:806px;height:54px;background:#2f2f2f;border-left:1px solid #d8d8d8;border-top:1px solid #d8d8d8;border-right:1px solid #d8d8d8"></div>
<div style="left:577px;top:1169px;width:804px;height:1px;background:#cfcfcf"></div>
<svg style="left:576px;top:1142px" width="808" height="40" viewBox="0 0 808 40"><rect x="17.0" y="23" width="1" height="9" fill="#bdbdbd"/><rect x="37.1" y="23" width="1" height="9" fill="#bdbdbd"/><rect x="57.2" y="23" width="1" height="9" fill="#bdbdbd"/><rect x="77.3" y="20" width="1.5" height="14" fill="#d8d8d8"/><rect x="97.5" y="23" width="1" height="9" fill="#bdbdbd"/><rect x="117.6" y="23" width="1" height="9" fill="#bdbdbd"/><rect x="137.7" y="23" width="1" height="9" fill="#bdbdbd"/><rect x="157.8" y="20" width="1.5" height="14" fill="#d8d8d8"/><rect x="178.0" y="23" width="1" height="9" fill="#bdbdbd"/><rect x="198.1" y="23" width="1" height="9" fill="#bdbdbd"/><rect x="218.2" y="23" width="1" height="9" fill="#bdbdbd"/><rect x="238.3" y="20" width="1.5" height="14" fill="#d8d8d8"/><rect x="258.5" y="23" width="1" height="9" fill="#bdbdbd"/><rect x="278.6" y="23" width="1" height="9" fill="#bdbdbd"/><rect x="298.7" y="23" width="1" height="9" fill="#bdbdbd"/><rect x="318.8" y="20" width="1.5" height="14" fill="#d8d8d8"/><rect x="339.0" y="23" width="1" height="9" fill="#bdbdbd"/><rect x="359.1" y="23" width="1" height="9" fill="#bdbdbd"/><rect x="379.2" y="23" width="1" height="9" fill="#bdbdbd"/><rect x="399.3" y="20" width="1.5" height="14" fill="#d8d8d8"/><rect x="419.5" y="23" width="1" height="9" fill="#bdbdbd"/><rect x="439.6" y="23" width="1" height="9" fill="#bdbdbd"/><rect x="459.7" y="23" width="1" height="9" fill="#bdbdbd"/><rect x="479.8" y="20" width="1.5" height="14" fill="#d8d8d8"/><rect x="499.9" y="23" width="1" height="9" fill="#bdbdbd"/><rect x="520.1" y="23" width="1" height="9" fill="#bdbdbd"/><rect x="540.2" y="23" width="1" height="9" fill="#bdbdbd"/><rect x="560.3" y="20" width="1.5" height="14" fill="#d8d8d8"/><rect x="580.4" y="23" width="1" height="9" fill="#bdbdbd"/><rect x="600.6" y="23" width="1" height="9" fill="#bdbdbd"/><rect x="620.7" y="23" width="1" height="9" fill="#bdbdbd"/><rect x="640.8" y="20" width="1.5" height="14" fill="#d8d8d8"/><rect x="660.9" y="23" width="1" height="9" fill="#bdbdbd"/><rect x="681.1" y="23" width="1" height="9" fill="#bdbdbd"/><rect x="701.2" y="23" width="1" height="9" fill="#bdbdbd"/><rect x="721.3" y="20" width="1.5" height="14" fill="#d8d8d8"/><rect x="741.4" y="23" width="1" height="9" fill="#bdbdbd"/><rect x="761.6" y="23" width="1" height="9" fill="#bdbdbd"/><rect x="781.7" y="23" width="1" height="9" fill="#bdbdbd"/><rect x="801.8" y="20" width="1.5" height="14" fill="#d8d8d8"/><rect x="0.2" y="23" width="1" height="9" fill="#bdbdbd"/></svg>
<span class="t" style="left:654.54px;top:1145.71px;font-size:18.22px;font-family:'Liberation Sans',sans-serif;font-weight:normal;font-style:normal;color:#d0d0d0;transform:scaleX(1.0796);">24</span>
<span class="t" style="left:735.04px;top:1145.71px;font-size:18.22px;font-family:'Liberation Sans',sans-serif;font-weight:normal;font-style:normal;color:#d0d0d0;transform:scaleX(1.0796);">48</span>
<span class="t" style="left:815.53px;top:1145.71px;font-size:18.22px;font-family:'Liberation Sans',sans-serif;font-weight:normal;font-style:normal;color:#d0d0d0;transform:scaleX(1.0796);">72</span>
<span class="t" style="left:896.03px;top:1145.71px;font-size:18.22px;font-family:'Liberation Sans',sans-serif;font-weight:normal;font-style:normal;color:#d0d0d0;transform:scaleX(1.0796);">96</span>
<span class="t" style="left:976.53px;top:1145.71px;font-size:18.22px;font-family:'Liberation Sans',sans-serif;font-weight:normal;font-style:normal;color:#d0d0d0;transform:scaleX(1.0801);">120</span>
<span class="t" style="left:1057.02px;top:1145.71px;font-size:18.22px;font-family:'Liberation Sans',sans-serif;font-weight:normal;font-style:normal;color:#d0d0d0;transform:scaleX(1.0801);">144</span>
<span class="t" style="left:1137.52px;top:1145.71px;font-size:18.22px;font-family:'Liberation Sans',sans-serif;font-weight:normal;font-style:normal;color:#d0d0d0;transform:scaleX(1.0801);">168</span>
<span class="t" style="left:1218.01px;top:1145.71px;font-size:18.22px;font-family:'Liberation Sans',sans-serif;font-weight:normal;font-style:normal;color:#d0d0d0;transform:scaleX(1.0801);">192</span>
<span class="t" style="left:1298.51px;top:1145.71px;font-size:18.22px;font-family:'Liberation Sans',sans-serif;font-weight:normal;font-style:normal;color:#d0d0d0;transform:scaleX(1.0801);">216</span>
<div style="left:577px;top:1143px;width:31px;height:23px;background:#000;border:1px solid #f0f0f0"></div>
<span class="t" style="left:587.00px;top:1144.89px;font-size:20.13px;font-family:'Liberation Sans',sans-serif;font-weight:normal;font-style:normal;color:#ffffff;transform:scaleX(1.0796);">1</span>
<div style="left:577px;top:1197px;width:804px;height:13px;background:linear-gradient(#4a4a4a,#3a3a3a)"></div>
<div style="left:577px;top:1197px;width:18px;height:13px;background:#3a3a3a;border-right:1px solid #2a2a2a"></div>
<div style="left:1363px;top:1197px;width:19px;height:13px;background:#3a3a3a;border-left:1px solid #2a2a2a"></div>
<svg style="left:583px;top:1203px" width="8" height="3" viewBox="0 0 8 3"><rect x="0" y="0" width="1.5" height="1.5" fill="#111"/><rect x="3" y="0" width="1.5" height="1.5" fill="#111"/><rect x="6" y="0" width="1.5" height="1.5" fill="#111"/></svg>
<svg style="left:975px;top:1203px" width="10" height="3" viewBox="0 0 10 3"><rect x="0" y="0" width="1.5" height="1.5" fill="#111"/><rect x="3" y="0" width="1.5" height="1.5" fill="#111"/><rect x="6" y="0" width="1.5" height="1.5" fill="#111"/><rect x="9" y="0" width="1" height="1.5" fill="#111"/></svg>
<svg style="left:1369px;top:1203px" width="8" height="3" viewBox="0 0 8 3"><rect x="0" y="0" width="1.5" height="1.5" fill="#111"/><rect x="3" y="0" width="1.5" height="1.5" fill="#111"/><rect x="6" y="0" width="1.5" height="1.5" fill="#111"/></svg>
<div style="left:1388px;top:1163px;width:73px;height:28px;background:#121212;border:1px solid #262626"></div>
<span class="t" style="left:1392.00px;top:1168.31px;font-size:20.24px;font-family:'Liberation Mono',monospace;font-weight:normal;font-style:normal;color:#f0f0f0;transform:scaleX(0.9070);">240</span>
<div style="left:1478px;top:1157px;width:37px;height:37px;background:linear-gradient(#4a4a4a,#3c3c3c);border:1px solid #1e1e1e"></div>
<svg style="left:1478px;top:1157px" width="37" height="37" viewBox="0 0 37 37"><g transform="translate(1,1)" opacity="0.6"><circle cx="12" cy="12" r="6.5" fill="none" stroke="#111" stroke-width="4.5"/><path d="M16,16 L29,29 M23,23 L20,26 M27,27 L24,30" stroke="#111" stroke-width="4"/></g><circle cx="12" cy="12" r="6.5" fill="none" stroke="#d8d8d0" stroke-width="4.5"/><path d="M16,16 L29,29 M23,23 L20,26 M27,27 L24,30" stroke="#d8d8d0" stroke-width="4"/></svg>
<div style="left:1523px;top:1157px;width:37px;height:37px;background:linear-gradient(#4a4a4a,#3c3c3c);border:1px solid #1e1e1e"></div>
<svg style="left:1523px;top:1157px" width="37" height="37" viewBox="0 0 37 37"><circle cx="18" cy="17" r="13.5" fill="#f0f0f0"/><circle cx="18" cy="17" r="11" fill="none" stroke="#1a1a2a" stroke-width="3.2"/><circle cx="18" cy="17" r="13.5" fill="none" stroke="#1a1a2a" stroke-width="1"/><path d="M18,11.5 L18,22.5 M12.5,17 L23.5,17" stroke="#1a1a2a" stroke-width="2"/></svg>
<div style="left:1560px;top:1157px;width:37px;height:37px;background:linear-gradient(#4a4a4a,#3c3c3c);border:1px solid #1e1e1e"></div>
<svg style="left:1560px;top:1157px" width="37" height="37" viewBox="0 0 37 37"><path d="M5,26 L32,26 Q33,12 22,9 Q14,8 12,14" fill="none" stroke="#111" stroke-width="6"/><path d="M5,26 L32,26 Q33,12 22,9 Q14,8 12,14" fill="none" stroke="#f0f0f0" stroke-width="3"/><polygon points="4,13 14,6 14,19" fill="#f0f0f0" stroke="#111" stroke-width="1.2"/><polygon points="25,30 33,30 29,35" fill="#8a8a8a"/></svg>
<div style="left:1597px;top:1157px;width:37px;height:37px;background:linear-gradient(#4a4a4a,#3c3c3c);border:1px solid #1e1e1e"></div>
<svg style="left:1597px;top:1157px" width="37" height="37" viewBox="0 0 37 37"><defs><linearGradient id="gspk" x1="0" y1="0" x2="1" y2="0"><stop offset="0" stop-color="#d8d8d8"/><stop offset="1" stop-color="#4a4a5a"/></linearGradient></defs><rect x="6" y="13" width="6" height="10" fill="url(#gspk)" stroke="#1a1a2a" stroke-width="0.8"/><polygon points="12,13 24,4 24,32 12,23" fill="#2a2a3a" stroke="#1a1a2a" stroke-width="1"/><ellipse cx="25" cy="18" rx="6.5" ry="14" fill="#2a2a3a" stroke="#f0f0f0" stroke-width="1.6"/><ellipse cx="17" cy="18" rx="2" ry="4" fill="#c8c8c8"/></svg>
<div style="left:1634px;top:1157px;width:37px;height:37px;background:linear-gradient(#4a4a4a,#3c3c3c);border:1px solid #1e1e1e"></div>
<svg style="left:1634px;top:1157px" width="37" height="37" viewBox="0 0 37 37"><rect x="7" y="5" width="22" height="23" fill="#ececec" stroke="#1a1a2a" stroke-width="1.5"/><rect x="8.5" y="6.5" width="19" height="4" fill="#9a9a9a"/><polygon points="21,15 21,33 25,29 28,34 31,32 28,28 34,27" fill="#111" stroke="#f0f0f0" stroke-width="1.2"/></svg>
<div style="left:0px;top:1216px;width:1688px;height:46px;background:#3a3a3a"></div>
<div style="left:2px;top:1216px;width:1382px;height:43px;background:#1b1b1b;border-bottom-left-radius:6px"></div>
<span class="t" style="left:4.00px;top:1227.73px;font-size:19.73px;font-family:'Liberation Sans',sans-serif;font-weight:normal;font-style:normal;color:#d6d6d6;transform:scaleX(1.0715);">Left sets render focus (cancels if clicked outside image). Shift+Left selects render region (cancels if clicked outside image). Middle pans. Right zo...</span>
<div style="left:1384px;top:1216px;width:36px;height:43px;background:#3c3c3c"></div>
<svg style="left:1386px;top:1222px" width="34" height="32" viewBox="0 0 34 32"><ellipse cx="15" cy="13" rx="13" ry="10" fill="#d8d8d8" stroke="#666" stroke-width="1"/><path d="M6,10 Q10,6 14,10 Q18,6 22,10 M5,15 Q10,12 15,16 Q20,12 25,16" stroke="#888" fill="none"/><polygon points="26,22 32,26 26,30" fill="#9a9a9a"/></svg>
<div style="left:1420px;top:1216px;width:36px;height:43px;background:#3c3c3c;border-left:1px solid #2a2a2a"></div>
<svg style="left:1423px;top:1223px" width="30" height="28" viewBox="0 0 30 28"><g fill="none" stroke="#bdbdbd" stroke-width="3.5"><path d="M5,14 A10,10 0 0 1 22,7"/><path d="M24,14 A10,10 0 0 1 7,21"/></g><polygon points="18,1 27,3 24,12" fill="#bdbdbd"/><polygon points="11,27 2,25 5,16" fill="#bdbdbd"/></svg>
<div style="left:1456px;top:1216px;width:190px;height:43px;background:linear-gradient(#4a4a4a,#3e3e3e);border-left:1px solid #2a2a2a"></div>
<div style="left:1622px;top:1217px;width:23px;height:42px;background:#353535"></div>
<span class="t" style="left:1474.00px;top:1225.61px;font-size:19.63px;font-family:'Liberation Sans',sans-serif;font-weight:normal;font-style:normal;color:#d6d6d6;transform:scaleX(1.0627);">Auto Update</span>
<svg style="left:1629px;top:1228px" width="8" height="19" viewBox="0 0 8 19"><polygon points="4,0 8,7 0,7" fill="#8a8a8a"/><polygon points="0,11 8,11 4,18" fill="#8a8a8a"/></svg>
<div style="left:0px;top:1259px;width:1688px;height:3px;background:#c4c4c4"></div>
<div style="left:0px;top:1259px;width:64px;height:3px;background:#5a4a78"></div>
<div style="left:1685px;top:0px;width:1px;height:1262px;background:#1a1a1a"></div>
<div style="left:1686px;top:0px;width:2px;height:1262px;background:#bbbbbb"></div></body></html>
